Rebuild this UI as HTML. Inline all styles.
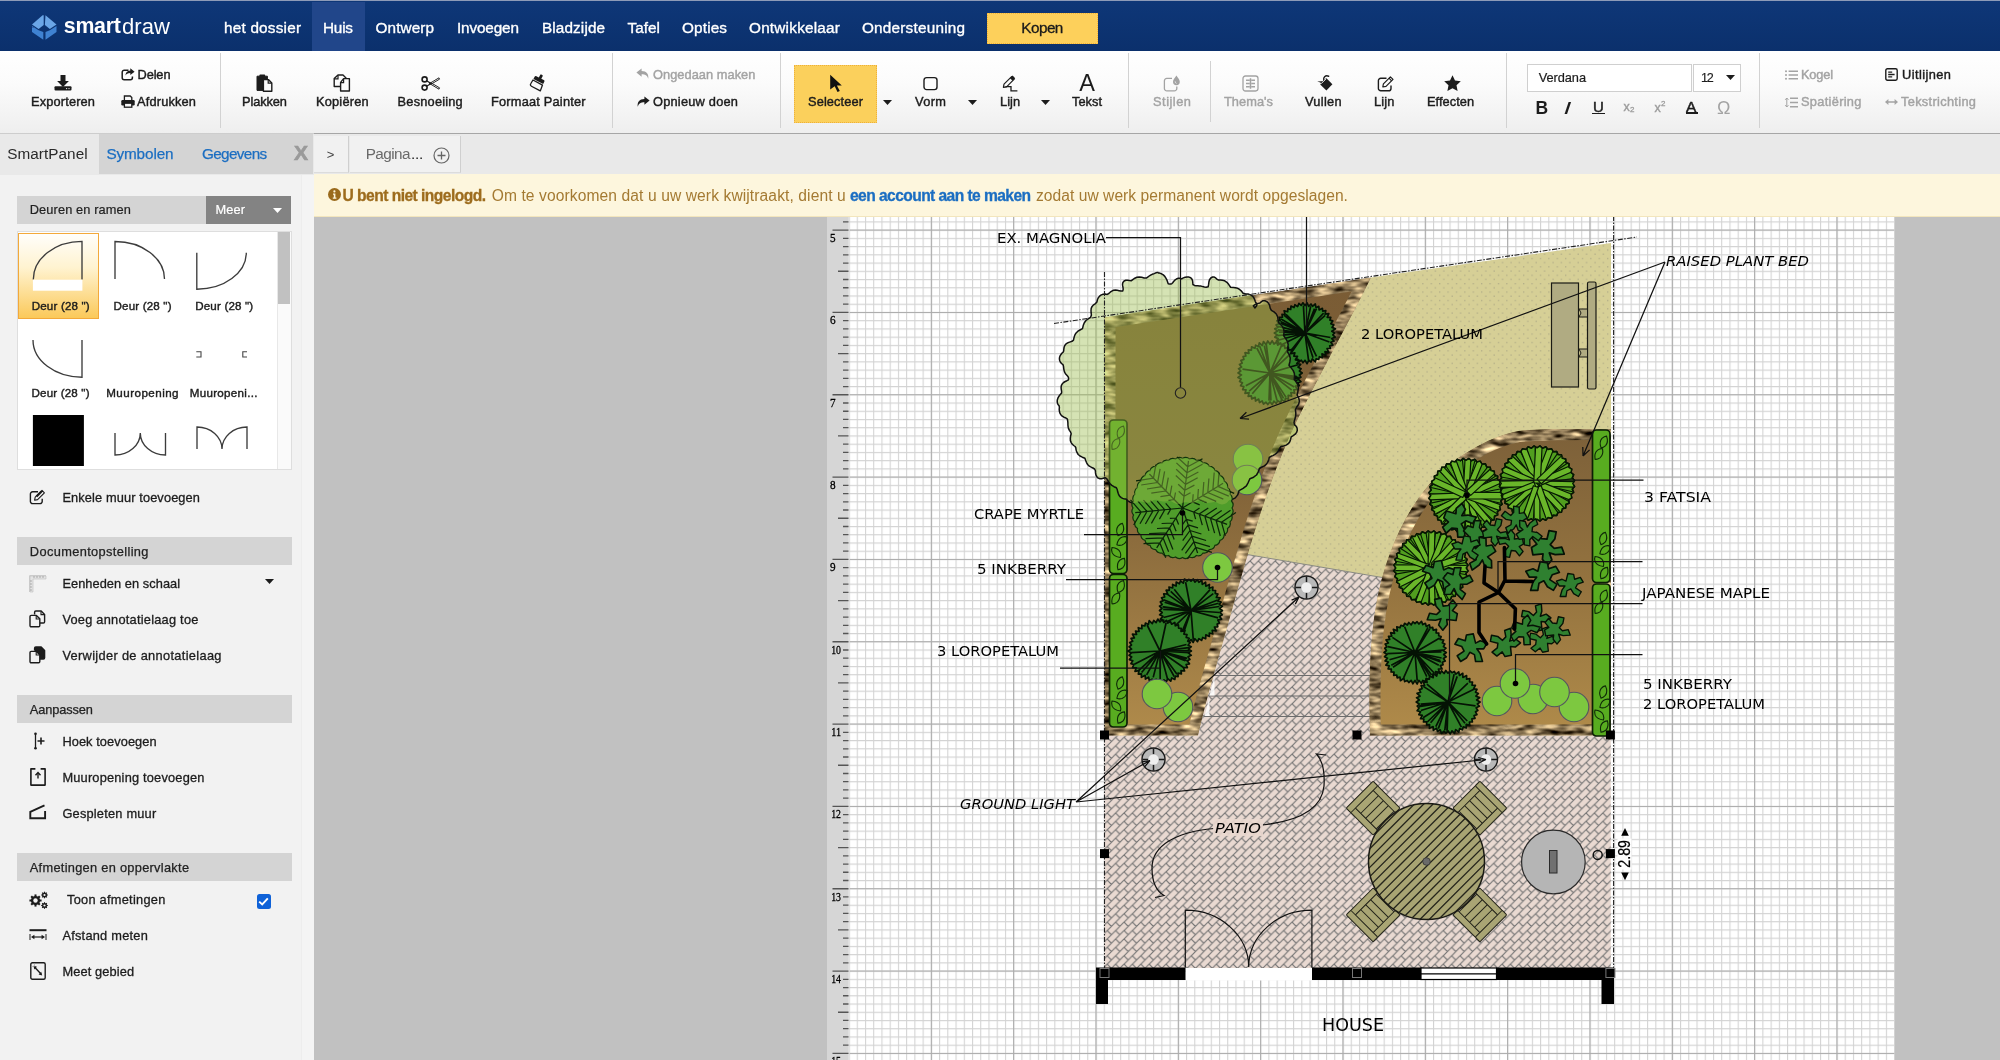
<!DOCTYPE html>
<html lang="nl"><head><meta charset="utf-8"><title>SmartDraw</title><style>
*{box-sizing:border-box}
html,body{margin:0;padding:0;width:2000px;height:1060px;overflow:hidden;background:#c1c1c1;font-family:"Liberation Sans",sans-serif}
.t{position:absolute;white-space:pre;line-height:1;}
.i{position:absolute;overflow:visible}
#nav{position:absolute;left:0;top:0;width:2000px;height:51px;background:linear-gradient(#0e3778,#0b306c)}
#navtop{position:absolute;left:0;top:0;width:2000px;height:1px;background:#8d9bb8}
#huis{position:absolute;left:312px;top:2px;width:53px;height:49px;background:#21468a}
#kopen{position:absolute;left:987px;top:12.800px;width:111.200px;height:31px;background:#fdd05b;border:1px dotted #f5b335}
#tb{position:absolute;left:0;top:51px;width:2000px;height:82.500px;background:linear-gradient(#fff 0%,#fbfbfb 40%,#eeeeee 100%)}
#tbline{position:absolute;left:313.500px;top:133.300px;width:1687px;height:1.800px;background:#a6a6a6}
#tbline2{position:absolute;left:0;top:133px;width:313.500px;height:1px;background:#cdcdcd}
.sep{position:absolute;width:1px;background:#d2d2d2}
#sel{position:absolute;left:794px;top:64.500px;width:83px;height:58.500px;background:#fbd05c;border:1px dotted #eeb03a}
#fontbox{position:absolute;left:1526.500px;top:64px;width:165px;height:27.500px;background:#fff;border:1px solid #cfcfcf}
#sizebox{position:absolute;left:1693px;top:64px;width:47.500px;height:27.500px;background:#fff;border:1px solid #cfcfcf}
#tabrow{position:absolute;left:0;top:133.500px;width:2000px;height:41px;background:#e9e9e9}
#tabgrey{position:absolute;left:99.200px;top:133.600px;width:214.300px;height:40px;background:#d4d4d4}
#tab1{position:absolute;left:313.500px;top:135.500px;width:35.300px;height:37.800px;background:#f1f1f1;border-right:1.200px solid #cfcfcf;border-bottom:1px solid #dcdcdc}
#tab2{position:absolute;left:349.500px;top:135.500px;width:111.500px;height:37.800px;background:#f1f1f1;border-right:1.200px solid #cfcfcf;border-bottom:1px solid #dcdcdc}
#banner{position:absolute;left:313.500px;top:174.200px;width:1687px;height:42.400px;background:#fdf6dd;border-bottom:1px solid #f3e6bd}
#left{position:absolute;left:0;top:134px;width:313.500px;height:926px;background:#f2f2f2}
#leftline{position:absolute;left:301px;top:174px;width:12.500px;height:886px;background:#f4f4f4;border-left:1px solid #ededed}
.hdr{position:absolute;background:#d4d4d4}
#meer{position:absolute;left:205.700px;top:196px;width:85.500px;height:28px;background:#838383}
#symbox{position:absolute;left:16.500px;top:230.500px;width:275px;height:239.500px;background:#fff;border:1px solid #dedede}
#symsel{position:absolute;left:17.500px;top:232.500px;width:81.500px;height:86.500px;background:linear-gradient(#fffefb 0%,#fff3d0 40%,#fbc95a 100%);border:1px solid #f3a93a}
#scrolltrack{position:absolute;left:276.500px;top:231.500px;width:14px;height:237.500px;background:#fafafa;border-left:1px solid #e8e8e8}
#scrollthumb{position:absolute;left:277.500px;top:232px;width:12.500px;height:71.500px;background:#c1c1c1}
#chk{position:absolute;left:256.500px;top:894px;width:14.500px;height:14.500px;background:#0f62d8;border-radius:2.500px}
#cv{position:absolute;left:0;top:0}
#root{position:absolute;left:0;top:0;width:2000px;height:1060px;will-change:transform}
</style></head><body><div id="root">
<svg id="cv" width="2000" height="1060" viewBox="0 0 2000 1060"><defs><pattern id="gmin" x="848.5" y="229.6" width="8.2330" height="8.2330" patternUnits="userSpaceOnUse"><path d="M0 0.500H8.233M0.500 0V8.233" stroke="#d3d3d3" stroke-width="1.150" fill="none"/></pattern><pattern id="gmaj" x="848.5" y="229.6" width="82.33" height="82.33" patternUnits="userSpaceOnUse"><path d="M0 0.500H82.33M0.500 0V82.33" stroke="#ababab" stroke-width="1.200" fill="none"/></pattern><pattern id="pave" x="6.800" y="6.600" width="8.4" height="8.4" patternUnits="userSpaceOnUse"><rect width="8.4" height="8.4" fill="#e9d9d1"/><path d="M-1 9.4L9.4 -1M-1 1L1 -1M7.4 9.4L9.4 7.4M0 0L4.2 4.2" stroke="#737373" stroke-width="1.150" fill="none"/></pattern><pattern id="sand" x="2.600" y="5.800" width="8.4" height="8.4" patternUnits="userSpaceOnUse"><rect width="8.4" height="8.4" fill="#d6cf96"/><rect x="0" y="0" width="1.300" height="1.300" fill="#b3ae88"/><rect x="4.2" y="4.2" width="1.300" height="1.300" fill="#b3ae88"/></pattern><linearGradient id="soilL" x1="0" y1="0" x2="0" y2="1"><stop offset="0" stop-color="#7a5c35"/><stop offset=".42" stop-color="#7f6138"/><stop offset="1" stop-color="#b08b4b"/></linearGradient><linearGradient id="soilR" x1="0" y1="0" x2="0" y2="1"><stop offset="0" stop-color="#7c6039"/><stop offset=".5" stop-color="#94733f"/><stop offset="1" stop-color="#b08b4a"/></linearGradient><filter id="stone" x="-5%" y="-5%" width="110%" height="110%" color-interpolation-filters="sRGB">
<feTurbulence type="fractalNoise" baseFrequency="0.06 0.17" numOctaves="2" seed="7" result="n"/>
<feColorMatrix in="n" type="matrix" values="1.75 0 0 0 -0.3  1.6 0 0 0 -0.31  1.3 0 0 0 -0.3  0 0 0 0 1" result="c"/>
<feComposite in="c" in2="SourceAlpha" operator="in"/></filter><clipPath id="cBL"><path d="M1104.5 317.5 L1371 277.5 C1345 330 1308 395 1288 440 C1262 500 1246 560 1232 610 C1218 660 1206 700 1198 735.5 L1104.5 735.5Z"/></clipPath><clipPath id="cBR"><path d="M1370 735.5 C1369 700 1369 665 1372.5 631 C1376 600 1381 578 1389 556 C1398 531 1410 508 1425.5 489 C1438 473 1453 460 1471 450 C1486 441 1502 434 1519 431 C1540 428.500 1565 429 1611 429 L1611 735.5Z"/></clipPath><clipPath id="cpage"><rect x="313.5" y="216.5" width="1700" height="860"/></clipPath></defs><g clip-path="url(#cpage)"><rect x="313.5" y="216.5" width="1687" height="850" fill="#c1c1c1"/><rect x="827" y="216.5" width="21.5" height="850" fill="#d6d6d6"/><rect x="848.5" y="216.5" width="1045.8" height="850" fill="#fff"/><rect x="848.5" y="216.5" width="1045.8" height="850" fill="url(#gmin)"/><rect x="849.8" y="216.5" width="1044.5" height="850" fill="url(#gmaj)"/><path d="M843 221.87H848.5M832.5 230.10H848.5M843 238.33H848.5M843 246.57H848.5M843 254.80H848.5M843 263.03H848.5M838 271.26H848.5M843 279.50H848.5M843 287.73H848.5M843 295.96H848.5M843 304.20H848.5M832.5 312.43H848.5M843 320.66H848.5M843 328.90H848.5M843 337.13H848.5M843 345.36H848.5M838 353.60H848.5M843 361.83H848.5M843 370.06H848.5M843 378.29H848.5M843 386.53H848.5M832.5 394.76H848.5M843 402.99H848.5M843 411.23H848.5M843 419.46H848.5M843 427.69H848.5M838 435.92H848.5M843 444.16H848.5M843 452.39H848.5M843 460.62H848.5M843 468.86H848.5M832.5 477.09H848.5M843 485.32H848.5M843 493.56H848.5M843 501.79H848.5M843 510.02H848.5M838 518.25H848.5M843 526.49H848.5M843 534.72H848.5M843 542.95H848.5M843 551.19H848.5M832.5 559.42H848.5M843 567.65H848.5M843 575.89H848.5M843 584.12H848.5M843 592.35H848.5M838 600.59H848.5M843 608.82H848.5M843 617.05H848.5M843 625.28H848.5M843 633.52H848.5M832.5 641.75H848.5M843 649.98H848.5M843 658.22H848.5M843 666.45H848.5M843 674.68H848.5M838 682.91H848.5M843 691.15H848.5M843 699.38H848.5M843 707.61H848.5M843 715.85H848.5M832.5 724.08H848.5M843 732.31H848.5M843 740.55H848.5M843 748.78H848.5M843 757.01H848.5M838 765.25H848.5M843 773.48H848.5M843 781.71H848.5M843 789.94H848.5M843 798.18H848.5M832.5 806.41H848.5M843 814.64H848.5M843 822.88H848.5M843 831.11H848.5M843 839.34H848.5M838 847.58H848.5M843 855.81H848.5M843 864.04H848.5M843 872.27H848.5M843 880.51H848.5M832.5 888.74H848.5M843 896.97H848.5M843 905.21H848.5M843 913.44H848.5M843 921.67H848.5M838 929.91H848.5M843 938.14H848.5M843 946.37H848.5M843 954.60H848.5M843 962.84H848.5M832.5 971.07H848.5M843 979.30H848.5M843 987.54H848.5M843 995.77H848.5M843 1004.00H848.5M838 1012.24H848.5M843 1020.47H848.5M843 1028.70H848.5M843 1036.93H848.5M843 1045.17H848.5M832.5 1053.40H848.5M843 1061.63H848.5" stroke="#555" stroke-width="1.300" fill="none"/><text x="830" y="242.0" font-family="Liberation Serif, serif" font-size="11.800" fill="#000" stroke="#000" stroke-width=".3" textLength="5.6" lengthAdjust="spacingAndGlyphs">5</text><text x="830" y="324.3" font-family="Liberation Serif, serif" font-size="11.800" fill="#000" stroke="#000" stroke-width=".3" textLength="5.6" lengthAdjust="spacingAndGlyphs">6</text><text x="830" y="406.7" font-family="Liberation Serif, serif" font-size="11.800" fill="#000" stroke="#000" stroke-width=".3" textLength="5.6" lengthAdjust="spacingAndGlyphs">7</text><text x="830" y="489.0" font-family="Liberation Serif, serif" font-size="11.800" fill="#000" stroke="#000" stroke-width=".3" textLength="5.6" lengthAdjust="spacingAndGlyphs">8</text><text x="830" y="571.3" font-family="Liberation Serif, serif" font-size="11.800" fill="#000" stroke="#000" stroke-width=".3" textLength="5.6" lengthAdjust="spacingAndGlyphs">9</text><text x="831.2" y="653.6" font-family="Liberation Serif, serif" font-size="11.800" fill="#000" stroke="#000" stroke-width=".3" textLength="9.8" lengthAdjust="spacingAndGlyphs">10</text><text x="831.2" y="736.0" font-family="Liberation Serif, serif" font-size="11.800" fill="#000" stroke="#000" stroke-width=".3" textLength="9.8" lengthAdjust="spacingAndGlyphs">11</text><text x="831.2" y="818.3" font-family="Liberation Serif, serif" font-size="11.800" fill="#000" stroke="#000" stroke-width=".3" textLength="9.8" lengthAdjust="spacingAndGlyphs">12</text><text x="831.2" y="900.6" font-family="Liberation Serif, serif" font-size="11.800" fill="#000" stroke="#000" stroke-width=".3" textLength="9.8" lengthAdjust="spacingAndGlyphs">13</text><text x="831.2" y="983.0" font-family="Liberation Serif, serif" font-size="11.800" fill="#000" stroke="#000" stroke-width=".3" textLength="9.8" lengthAdjust="spacingAndGlyphs">14</text><text x="831.2" y="1065.3" font-family="Liberation Serif, serif" font-size="11.800" fill="#000" stroke="#000" stroke-width=".3" textLength="9.8" lengthAdjust="spacingAndGlyphs">15</text><path d="M1371 277.5 L1611 243 L1611 440 L1400 600 L1391 579 L1247 554.500 C1262 500 1280 450 1300 410 C1320 370 1348 322 1371 277.5Z" fill="url(#sand)"/><path d="M1247 554.500 L1391 579 L1400 600 L1400 735.5 L1610.8 735.5 L1610.8 968 L1104.5 968 L1104.5 735.5 L1198 735.5 C1206 700 1218 660 1232 610Z" fill="url(#pave)"/><path d="M1214 675.500H1370M1209 696H1370M1204 716.500H1370" stroke="#6c6c6c" stroke-width="1.100" fill="none"/><path d="M1247 554.500L1391 579" stroke="#8a8a80" stroke-width="1" fill="none"/><path d="M1214.500 676.500L1209.500 695.500H1214.500ZM1209.500 697L1204.500 716H1209.500Z" fill="#fff" opacity=".85"/><g clip-path="url(#cBL)"><path d="M1104.5 317.5 L1371 277.5 C1345 330 1308 395 1288 440 C1262 500 1246 560 1232 610 C1218 660 1206 700 1198 735.5 L1104.5 735.5Z" fill="url(#soilL)"/><path d="M1104.5 317.5 L1371 277.5 C1345 330 1308 395 1288 440 C1262 500 1246 560 1232 610 C1218 660 1206 700 1198 735.5 L1104.5 735.5Z" fill="none" stroke="#a59668" stroke-width="22" filter="url(#stone)"/></g><g clip-path="url(#cBR)"><path d="M1370 735.5 C1369 700 1369 665 1372.5 631 C1376 600 1381 578 1389 556 C1398 531 1410 508 1425.5 489 C1438 473 1453 460 1471 450 C1486 441 1502 434 1519 431 C1540 428.500 1565 429 1611 429 L1611 735.5Z" fill="url(#soilR)"/><path d="M1370 735.5 C1369 700 1369 665 1372.5 631 C1376 600 1381 578 1389 556 C1398 531 1410 508 1425.5 489 C1438 473 1453 460 1471 450 C1486 441 1502 434 1519 431 C1540 428.500 1565 429 1611 429 L1611 735.5Z" fill="none" stroke="#a59668" stroke-width="22" filter="url(#stone)"/></g><path d="M1334.8 333.0 L1332.8 334.9 L1335.2 337.2 L1331.6 338.5 L1334.1 341.1 L1330.8 342.2 L1332.9 345.1 L1329.7 345.8 L1330.4 348.4 L1327.0 348.5 L1328.7 352.3 L1325.0 351.7 L1325.8 355.3 L1322.0 353.9 L1322.4 357.6 L1319.4 356.7 L1318.7 359.5 L1316.2 358.7 L1315.3 361.9 L1312.3 358.9 L1311.0 362.0 L1308.7 360.3 L1307.1 363.7 L1305.0 360.3 L1303.0 362.8 L1301.3 360.1 L1299.0 362.0 L1297.7 359.1 L1294.9 361.4 L1294.1 358.2 L1291.3 359.5 L1290.9 356.2 L1287.8 357.4 L1287.7 354.3 L1284.6 354.9 L1285.3 351.4 L1281.3 352.3 L1282.5 348.9 L1279.1 348.8 L1280.9 345.5 L1276.8 345.3 L1278.7 342.3 L1276.4 341.0 L1278.3 338.6 L1274.8 337.1 L1277.3 334.9 L1274.3 333.0 L1277.7 331.1 L1274.7 328.8 L1277.9 327.4 L1276.1 324.9 L1279.0 323.8 L1276.9 320.8 L1280.2 320.2 L1279.2 317.3 L1282.5 317.1 L1282.0 314.3 L1285.1 314.5 L1284.1 310.7 L1287.7 311.8 L1287.8 308.6 L1290.7 309.5 L1291.0 306.0 L1294.0 307.6 L1294.9 304.7 L1297.6 306.6 L1298.9 303.4 L1301.2 305.4 L1302.9 302.8 L1305.0 305.6 L1307.1 302.9 L1308.7 306.3 L1311.0 304.0 L1312.5 306.3 L1315.3 304.0 L1316.0 307.7 L1318.8 306.3 L1319.1 309.9 L1322.4 308.3 L1322.7 311.2 L1325.8 310.7 L1325.1 314.2 L1328.8 313.7 L1327.2 317.3 L1330.8 317.3 L1329.9 320.1 L1332.8 320.9 L1330.8 323.8 L1333.8 324.9 L1332.0 327.4 L1335.5 328.8 L1331.8 331.2Z" fill="#308028" stroke="#041204" stroke-width="1.7" stroke-linejoin="round"/><path d="M1305.0 333.0L1330.4 337.5M1305.0 333.0L1329.4 342.0M1305.0 333.0L1316.5 356.3M1305.0 333.0L1313.0 357.7M1305.0 333.0L1308.5 360.1M1305.0 333.0L1290.3 354.3M1305.0 333.0L1288.6 353.6M1305.0 333.0L1280.2 345.4M1305.0 333.0L1278.0 340.3M1305.0 333.0L1277.2 335.6M1305.0 333.0L1278.9 332.2M1305.0 333.0L1277.8 329.8M1305.0 333.0L1278.1 326.4M1305.0 333.0L1280.5 323.1M1305.0 333.0L1280.4 321.4M1305.0 333.0L1281.0 318.9M1305.0 333.0L1284.0 315.1M1305.0 333.0L1286.0 314.3M1305.0 333.0L1303.4 305.5M1305.0 333.0L1310.7 306.3M1305.0 333.0L1314.5 308.6M1305.0 333.0L1316.5 308.7M1305.0 333.0L1323.6 313.2M1305.0 333.0L1325.2 315.4" stroke="#041204" stroke-width="1.7" fill="none"/><path d="M1302.2 373.0 L1299.4 375.0 L1300.9 377.2 L1297.9 378.8 L1300.9 381.7 L1297.6 382.8 L1299.3 385.7 L1295.5 386.2 L1297.2 389.5 L1293.8 389.8 L1294.7 393.1 L1290.9 392.5 L1291.6 396.1 L1288.2 395.4 L1288.4 399.1 L1285.4 398.3 L1284.8 401.6 L1281.6 399.6 L1280.6 402.8 L1277.7 400.6 L1276.3 403.5 L1273.9 401.1 L1272.2 404.6 L1270.0 401.8 L1267.8 404.5 L1266.0 402.2 L1263.5 404.1 L1262.2 401.0 L1259.5 402.6 L1258.7 399.1 L1255.5 401.0 L1255.2 397.4 L1251.7 398.9 L1251.3 395.9 L1248.2 396.3 L1249.1 392.5 L1245.0 393.3 L1246.0 389.9 L1242.7 389.6 L1243.8 386.6 L1240.6 385.8 L1242.4 382.8 L1239.6 381.5 L1241.1 379.0 L1238.0 377.4 L1241.5 374.9 L1238.0 373.0 L1240.8 371.0 L1238.6 368.7 L1241.6 367.1 L1239.5 364.5 L1242.2 363.1 L1240.9 360.4 L1243.9 359.5 L1243.1 356.6 L1245.9 356.0 L1245.0 352.7 L1248.9 353.3 L1248.3 349.8 L1251.4 350.1 L1251.6 346.9 L1255.0 348.3 L1255.6 345.2 L1258.5 346.6 L1259.3 342.9 L1262.3 345.5 L1263.5 341.5 L1266.1 344.6 L1267.8 340.9 L1270.0 344.2 L1272.2 340.8 L1274.0 344.0 L1276.5 342.0 L1277.8 345.1 L1280.7 343.0 L1281.6 346.3 L1284.5 345.1 L1284.9 348.5 L1288.3 347.1 L1288.6 350.1 L1291.7 349.7 L1290.8 353.6 L1294.9 352.8 L1293.9 356.1 L1297.5 356.3 L1295.4 359.8 L1299.3 360.3 L1296.8 363.5 L1300.7 364.4 L1298.1 367.2 L1301.1 368.7 L1299.4 371.0Z" fill="#308028" stroke="#041204" stroke-width="1.7" stroke-linejoin="round"/><path d="M1270.0 373.0L1296.8 376.6M1270.0 373.0L1298.8 377.6M1270.0 373.0L1298.8 378.9M1270.0 373.0L1297.6 380.7M1270.0 373.0L1294.3 386.9M1270.0 373.0L1291.7 390.1M1270.0 373.0L1286.1 397.4M1270.0 373.0L1283.5 398.3M1270.0 373.0L1281.9 399.9M1270.0 373.0L1277.0 400.5M1270.0 373.0L1270.9 400.6M1270.0 373.0L1269.0 400.6M1270.0 373.0L1252.3 393.7M1270.0 373.0L1249.2 391.2M1270.0 373.0L1245.8 385.7M1270.0 373.0L1242.5 369.1M1270.0 373.0L1256.8 348.0M1270.0 373.0L1259.6 346.0M1270.0 373.0L1264.3 345.7M1270.0 373.0L1266.3 344.5M1270.0 373.0L1281.3 346.0M1270.0 373.0L1287.2 350.5M1270.0 373.0L1290.0 354.4M1270.0 373.0L1298.0 364.8" stroke="#041204" stroke-width="1.7" fill="none"/><rect x="1109.5" y="574.5" width="17.5" height="152.5" rx="4" fill="#58ac20" stroke="#0c1f05" stroke-width="1.700"/><path d="M0 -6.500Q4.500 -2 3.200 2.500Q2 5.500 0 6.500Q-4.500 2 -3.200 -2.500Q-2 -5.500 0 -6.500Z" transform="translate(1120.8 586.5) rotate(25)" fill="none" stroke="#0f2a08" stroke-width="1.100"/><path d="M0 -6.500Q4.500 -2 3.200 2.500Q2 5.500 0 6.500Q-4.500 2 -3.200 -2.500Q-2 -5.500 0 -6.500Z" transform="translate(1115.8 598.5) rotate(35)" fill="none" stroke="#0f2a08" stroke-width="1.100"/><path d="M0 -6.500Q4.500 -2 3.200 2.500Q2 5.500 0 6.500Q-4.500 2 -3.200 -2.500Q-2 -5.500 0 -6.500Z" transform="translate(1120.2 683.0) rotate(20)" fill="none" stroke="#0f2a08" stroke-width="1.100"/><path d="M0 -6.500Q4.500 -2 3.200 2.500Q2 5.500 0 6.500Q-4.500 2 -3.200 -2.500Q-2 -5.500 0 -6.500Z" transform="translate(1122.2 694.5) rotate(55)" fill="none" stroke="#0f2a08" stroke-width="1.100"/><path d="M0 -6.500Q4.500 -2 3.200 2.500Q2 5.500 0 6.500Q-4.500 2 -3.200 -2.500Q-2 -5.500 0 -6.500Z" transform="translate(1116.2 706.0) rotate(-40)" fill="none" stroke="#0f2a08" stroke-width="1.100"/><path d="M0 -6.500Q4.500 -2 3.200 2.500Q2 5.500 0 6.500Q-4.500 2 -3.200 -2.500Q-2 -5.500 0 -6.500Z" transform="translate(1121.2 717.5) rotate(30)" fill="none" stroke="#0f2a08" stroke-width="1.100"/><rect x="1592.5" y="430" width="17.5" height="152.5" rx="4" fill="#58ac20" stroke="#0c1f05" stroke-width="1.700"/><path d="M0 -6.500Q4.500 -2 3.200 2.500Q2 5.500 0 6.500Q-4.500 2 -3.200 -2.500Q-2 -5.500 0 -6.500Z" transform="translate(1603.8 442.0) rotate(25)" fill="none" stroke="#0f2a08" stroke-width="1.100"/><path d="M0 -6.500Q4.500 -2 3.200 2.500Q2 5.500 0 6.500Q-4.500 2 -3.200 -2.500Q-2 -5.500 0 -6.500Z" transform="translate(1598.8 454.0) rotate(35)" fill="none" stroke="#0f2a08" stroke-width="1.100"/><path d="M0 -6.500Q4.500 -2 3.200 2.500Q2 5.500 0 6.500Q-4.500 2 -3.200 -2.500Q-2 -5.500 0 -6.500Z" transform="translate(1603.2 538.5) rotate(20)" fill="none" stroke="#0f2a08" stroke-width="1.100"/><path d="M0 -6.500Q4.500 -2 3.200 2.500Q2 5.500 0 6.500Q-4.500 2 -3.200 -2.500Q-2 -5.500 0 -6.500Z" transform="translate(1605.2 550.0) rotate(55)" fill="none" stroke="#0f2a08" stroke-width="1.100"/><path d="M0 -6.500Q4.500 -2 3.200 2.500Q2 5.500 0 6.500Q-4.500 2 -3.200 -2.500Q-2 -5.500 0 -6.500Z" transform="translate(1599.2 561.5) rotate(-40)" fill="none" stroke="#0f2a08" stroke-width="1.100"/><path d="M0 -6.500Q4.500 -2 3.200 2.500Q2 5.500 0 6.500Q-4.500 2 -3.200 -2.500Q-2 -5.500 0 -6.500Z" transform="translate(1604.2 573.0) rotate(30)" fill="none" stroke="#0f2a08" stroke-width="1.100"/><rect x="1592.5" y="584" width="17.5" height="152" rx="4" fill="#58ac20" stroke="#0c1f05" stroke-width="1.700"/><path d="M0 -6.500Q4.500 -2 3.200 2.500Q2 5.500 0 6.500Q-4.500 2 -3.200 -2.500Q-2 -5.500 0 -6.500Z" transform="translate(1603.8 596.0) rotate(25)" fill="none" stroke="#0f2a08" stroke-width="1.100"/><path d="M0 -6.500Q4.500 -2 3.200 2.500Q2 5.500 0 6.500Q-4.500 2 -3.200 -2.500Q-2 -5.500 0 -6.500Z" transform="translate(1598.8 608.0) rotate(35)" fill="none" stroke="#0f2a08" stroke-width="1.100"/><path d="M0 -6.500Q4.500 -2 3.200 2.500Q2 5.500 0 6.500Q-4.500 2 -3.200 -2.500Q-2 -5.500 0 -6.500Z" transform="translate(1603.2 692.0) rotate(20)" fill="none" stroke="#0f2a08" stroke-width="1.100"/><path d="M0 -6.500Q4.500 -2 3.200 2.500Q2 5.500 0 6.500Q-4.500 2 -3.200 -2.500Q-2 -5.500 0 -6.500Z" transform="translate(1605.2 703.5) rotate(55)" fill="none" stroke="#0f2a08" stroke-width="1.100"/><path d="M0 -6.500Q4.500 -2 3.200 2.500Q2 5.500 0 6.500Q-4.500 2 -3.200 -2.500Q-2 -5.500 0 -6.500Z" transform="translate(1599.2 715.0) rotate(-40)" fill="none" stroke="#0f2a08" stroke-width="1.100"/><path d="M0 -6.500Q4.500 -2 3.200 2.500Q2 5.500 0 6.500Q-4.500 2 -3.200 -2.500Q-2 -5.500 0 -6.500Z" transform="translate(1604.2 726.5) rotate(30)" fill="none" stroke="#0f2a08" stroke-width="1.100"/><circle cx="1248" cy="459" r="14.8" fill="#7dc840" stroke="#55555f" stroke-width="1.100"/><circle cx="1247" cy="480" r="14.8" fill="#7dc840" stroke="#55555f" stroke-width="1.100"/><rect x="1109.5" y="420" width="17.5" height="153.5" rx="4" fill="#58ac20" stroke="#0c1f05" stroke-width="1.700"/><path d="M0 -6.500Q4.500 -2 3.200 2.500Q2 5.500 0 6.500Q-4.500 2 -3.200 -2.500Q-2 -5.500 0 -6.500Z" transform="translate(1120.8 432.0) rotate(25)" fill="none" stroke="#0f2a08" stroke-width="1.100"/><path d="M0 -6.500Q4.500 -2 3.200 2.500Q2 5.500 0 6.500Q-4.500 2 -3.200 -2.500Q-2 -5.500 0 -6.500Z" transform="translate(1115.8 444.0) rotate(35)" fill="none" stroke="#0f2a08" stroke-width="1.100"/><path d="M0 -6.500Q4.500 -2 3.200 2.500Q2 5.500 0 6.500Q-4.500 2 -3.200 -2.500Q-2 -5.500 0 -6.500Z" transform="translate(1120.2 529.5) rotate(20)" fill="none" stroke="#0f2a08" stroke-width="1.100"/><path d="M0 -6.500Q4.500 -2 3.200 2.500Q2 5.500 0 6.500Q-4.500 2 -3.200 -2.500Q-2 -5.500 0 -6.500Z" transform="translate(1122.2 541.0) rotate(55)" fill="none" stroke="#0f2a08" stroke-width="1.100"/><path d="M0 -6.500Q4.500 -2 3.200 2.500Q2 5.500 0 6.500Q-4.500 2 -3.200 -2.500Q-2 -5.500 0 -6.500Z" transform="translate(1116.2 552.5) rotate(-40)" fill="none" stroke="#0f2a08" stroke-width="1.100"/><path d="M0 -6.500Q4.500 -2 3.200 2.500Q2 5.500 0 6.500Q-4.500 2 -3.200 -2.500Q-2 -5.500 0 -6.500Z" transform="translate(1121.2 564.0) rotate(30)" fill="none" stroke="#0f2a08" stroke-width="1.100"/><path d="M1158.5 273.1 L1159.7 273.1 L1161.5 273.8 L1163.3 274.9 L1164.8 276.4 L1165.8 278.0 L1166.6 279.4 L1167.2 280.8 L1167.7 282.3 L1168.2 283.7 L1169.6 284.1 L1170.9 284.1 L1171.9 283.6 L1172.7 282.7 L1173.6 281.5 L1174.8 280.2 L1176.4 279.0 L1178.3 278.3 L1180.1 278.3 L1181.7 278.9 L1183.3 277.9 L1185.2 277.2 L1187.1 276.9 L1189.0 277.1 L1190.7 277.8 L1191.9 279.1 L1192.6 280.8 L1192.8 282.6 L1192.9 284.5 L1194.5 285.4 L1196.1 285.7 L1197.8 285.8 L1199.5 285.9 L1201.1 286.1 L1202.7 286.6 L1204.4 287.0 L1206.1 287.2 L1208.2 286.7 L1208.6 284.4 L1208.9 282.0 L1209.5 279.8 L1210.8 278.0 L1212.5 277.0 L1214.3 277.1 L1215.7 277.9 L1216.8 279.1 L1218.2 279.9 L1220.3 279.9 L1222.4 280.2 L1224.7 280.8 L1226.9 282.3 L1228.8 284.6 L1230.6 287.2 L1233.8 287.4 L1236.6 287.9 L1239.0 289.0 L1241.2 290.8 L1243.1 293.2 L1245.7 294.0 L1248.5 294.1 L1250.7 294.9 L1252.5 296.1 L1253.8 297.8 L1254.7 299.6 L1255.2 301.3 L1255.7 302.5 L1256.6 303.1 L1257.0 304.0 L1256.8 305.3 L1256.1 306.6 L1255.3 307.5 L1254.9 307.9 L1253.3 305.8 L1253.9 305.3 L1255.3 304.3 L1257.5 303.4 L1260.0 302.9 L1261.5 301.7 L1263.0 300.7 L1264.9 300.8 L1266.9 301.6 L1268.5 303.2 L1269.6 305.4 L1270.2 308.1 L1271.4 310.4 L1274.0 311.9 L1276.3 314.0 L1277.7 316.8 L1278.1 320.2 L1279.1 323.3 L1281.8 325.7 L1283.5 328.5 L1284.1 331.8 L1283.6 335.5 L1285.5 338.4 L1287.4 341.4 L1288.2 344.7 L1287.6 348.3 L1287.5 351.8 L1289.4 355.0 L1290.3 358.3 L1289.9 361.7 L1289.0 365.2 L1291.1 367.9 L1293.1 370.4 L1294.3 373.1 L1294.6 376.1 L1294.2 379.4 L1296.2 382.0 L1297.9 384.8 L1298.4 388.1 L1297.8 391.5 L1297.1 394.8 L1298.7 397.9 L1299.4 401.1 L1298.7 404.2 L1296.7 407.0 L1295.4 409.8 L1295.8 413.0 L1295.7 415.8 L1295.2 418.1 L1294.5 420.2 L1294.0 422.6 L1294.5 424.6 L1296.1 426.2 L1297.1 428.1 L1297.3 430.3 L1296.6 432.4 L1295.2 434.2 L1293.2 435.6 L1291.2 436.9 L1290.6 439.4 L1289.8 441.7 L1288.3 443.7 L1286.2 445.1 L1283.7 445.9 L1281.0 446.4 L1279.6 448.5 L1278.5 450.6 L1277.4 452.3 L1276.1 453.7 L1274.6 454.7 L1272.9 455.6 L1271.0 456.3 L1269.3 457.4 L1268.8 459.4 L1268.2 461.2 L1267.3 462.9 L1266.2 464.4 L1264.4 465.8 L1262.0 467.0 L1259.4 468.5 L1258.3 471.9 L1256.5 475.0 L1253.6 477.2 L1249.9 478.7 L1248.3 482.3 L1246.4 485.8 L1243.1 488.4 L1239.1 490.6 L1237.7 494.9 L1235.3 497.9 L1232.3 499.4 L1229.7 500.0 L1228.3 500.9 L1227.4 502.2 L1226.1 503.2 L1224.4 504.0 L1222.0 504.4 L1219.0 503.8 L1215.6 501.8 L1211.6 502.5 L1207.5 503.0 L1203.6 501.8 L1200.0 499.9 L1196.6 501.6 L1193.4 502.9 L1190.0 503.1 L1186.5 502.2 L1183.3 502.6 L1180.0 504.1 L1176.5 504.1 L1173.2 502.6 L1170.1 500.5 L1166.4 501.4 L1163.0 501.6 L1160.0 501.0 L1156.8 499.7 L1153.6 500.1 L1150.7 501.9 L1147.8 502.7 L1144.8 502.6 L1142.0 501.6 L1139.5 501.4 L1137.0 502.5 L1134.6 503.0 L1132.5 503.0 L1130.5 502.4 L1128.9 501.5 L1127.6 500.5 L1126.7 499.6 L1126.1 499.0 L1125.1 499.0 L1124.0 498.8 L1122.6 498.4 L1121.3 497.6 L1120.0 496.6 L1119.0 495.2 L1118.3 493.6 L1117.7 491.8 L1117.3 489.8 L1116.4 487.8 L1114.0 486.7 L1111.8 485.4 L1110.1 483.8 L1108.8 482.1 L1107.8 480.3 L1106.7 478.7 L1105.1 477.7 L1103.3 478.3 L1101.7 478.7 L1099.9 478.7 L1098.2 478.1 L1096.8 476.7 L1095.9 474.9 L1095.5 472.9 L1095.4 470.7 L1094.6 469.0 L1092.9 468.0 L1091.5 467.3 L1090.3 466.7 L1089.3 466.1 L1088.3 465.2 L1087.3 464.1 L1086.5 462.5 L1085.7 460.5 L1084.9 458.2 L1082.3 457.2 L1080.0 456.0 L1078.2 454.5 L1077.1 452.7 L1076.4 451.0 L1076.0 449.3 L1075.8 447.7 L1075.1 446.5 L1073.7 445.5 L1072.3 444.3 L1071.2 442.6 L1070.4 440.6 L1070.3 438.3 L1070.6 436.0 L1071.2 433.7 L1070.5 431.9 L1069.4 430.3 L1068.6 428.7 L1068.2 427.2 L1068.0 425.8 L1067.9 424.4 L1067.9 422.9 L1067.7 421.2 L1067.4 419.2 L1065.9 418.0 L1063.9 417.2 L1062.2 416.1 L1060.8 414.7 L1059.9 413.1 L1059.4 411.3 L1059.2 409.3 L1059.4 407.4 L1059.1 405.8 L1058.0 404.5 L1057.4 403.0 L1057.2 401.4 L1057.3 399.9 L1057.8 398.4 L1058.4 397.1 L1059.3 395.8 L1060.3 394.4 L1061.6 392.9 L1061.6 391.1 L1061.2 389.2 L1061.1 387.3 L1061.4 385.4 L1062.3 383.8 L1063.6 382.5 L1065.2 381.5 L1066.9 380.7 L1068.5 379.8 L1068.6 378.1 L1068.1 376.8 L1067.3 375.8 L1066.6 375.0 L1065.7 374.0 L1065.0 372.9 L1064.4 371.6 L1064.0 370.1 L1063.7 368.3 L1063.5 366.4 L1063.0 364.7 L1061.5 363.5 L1060.3 362.1 L1059.7 360.5 L1059.4 358.9 L1059.6 357.2 L1060.2 355.6 L1061.1 354.3 L1062.1 353.0 L1063.3 352.0 L1063.7 350.8 L1063.8 349.3 L1064.0 347.8 L1064.4 346.4 L1065.0 345.2 L1065.8 344.1 L1066.8 343.4 L1067.8 342.8 L1068.9 342.4 L1070.3 341.9 L1072.0 341.3 L1073.5 340.1 L1074.0 337.7 L1074.7 335.4 L1075.9 333.2 L1077.6 331.4 L1079.9 330.0 L1082.5 328.6 L1083.2 325.6 L1084.3 322.8 L1086.0 320.5 L1088.2 318.8 L1090.6 317.3 L1091.4 315.1 L1091.1 312.7 L1091.0 310.5 L1091.2 308.4 L1092.1 306.4 L1093.6 304.8 L1095.5 303.6 L1096.9 302.0 L1097.4 299.8 L1098.3 297.8 L1099.6 296.1 L1101.3 294.9 L1103.1 294.3 L1105.2 294.1 L1107.2 294.4 L1108.8 293.5 L1110.2 292.2 L1111.8 291.1 L1113.5 290.3 L1115.5 290.1 L1117.3 290.3 L1119.1 290.7 L1120.9 291.1 L1122.8 290.9 L1123.2 289.2 L1123.0 287.5 L1122.7 285.9 L1122.5 284.2 L1122.9 282.5 L1124.1 281.0 L1125.8 280.3 L1127.6 280.2 L1129.5 280.5 L1131.4 280.7 L1133.1 279.4 L1134.8 278.2 L1136.9 277.3 L1139.2 277.0 L1141.7 277.3 L1144.1 278.0 L1146.3 278.1 L1148.0 276.9 L1149.2 276.0 L1150.2 275.3 L1151.1 274.8 L1151.8 274.5 L1152.6 274.1 L1153.4 273.9 L1154.2 273.6 L1155.2 273.1 L1156.2 272.7 L1157.3 272.4 L1158.1 272.6Z" fill="rgba(152,187,74,0.41)" stroke="#111" stroke-width="1.500" stroke-linejoin="round"/><clipPath id="ccrape"><circle cx="1182.500" cy="508" r="50"/></clipPath><path d="M1232.0 508.0Q1234.5 511.7 1231.5 515.0Q1233.4 519.1 1230.0 521.9Q1231.3 526.2 1227.5 528.6Q1228.2 533.0 1224.1 534.8Q1224.2 539.2 1219.9 540.4Q1219.3 544.8 1214.9 545.4Q1213.7 549.7 1209.3 549.6Q1207.5 553.7 1203.1 553.0Q1200.7 556.8 1196.4 555.5Q1193.6 558.9 1189.5 557.0Q1186.2 560.0 1182.5 557.5Q1178.8 560.0 1175.5 557.0Q1171.4 558.9 1168.6 555.5Q1164.3 556.8 1161.9 553.0Q1157.5 553.7 1155.7 549.6Q1151.3 549.7 1150.1 545.4Q1145.7 544.8 1145.1 540.4Q1140.8 539.2 1140.9 534.8Q1136.8 533.0 1137.5 528.6Q1133.7 526.2 1135.0 521.9Q1131.6 519.1 1133.5 515.0Q1130.5 511.7 1133.0 508.0Q1130.5 504.3 1133.5 501.0Q1131.6 496.9 1135.0 494.1Q1133.7 489.8 1137.5 487.4Q1136.8 483.0 1140.9 481.2Q1140.8 476.8 1145.1 475.6Q1145.7 471.2 1150.1 470.6Q1151.3 466.3 1155.7 466.4Q1157.5 462.3 1161.9 463.0Q1164.3 459.2 1168.6 460.5Q1171.4 457.1 1175.5 459.0Q1178.8 456.0 1182.5 458.5Q1186.2 456.0 1189.5 459.0Q1193.6 457.1 1196.4 460.5Q1200.7 459.2 1203.1 463.0Q1207.5 462.3 1209.3 466.4Q1213.7 466.3 1214.9 470.6Q1219.3 471.2 1219.9 475.6Q1224.2 476.8 1224.1 481.2Q1228.2 483.0 1227.5 487.4Q1231.3 489.8 1230.0 494.1Q1233.4 496.9 1231.5 501.0Q1234.5 504.3 1232.0 508.0Z" fill="#4f9d2b" stroke="#12330c" stroke-width="1.200"/><path d="M1182.5 508.0L1227.1 524.3M1193.7 512.1L1199.5 508.1M1193.7 512.1L1195.6 519.1M1199.2 514.1L1208.3 507.9M1199.2 514.1L1202.3 525.1M1204.8 516.1L1216.8 508.0M1204.8 516.1L1208.9 530.8M1210.4 518.2L1221.7 510.4M1210.4 518.2L1214.6 533.2M1216.0 520.2L1230.5 510.3M1216.0 520.2L1220.3 536.0M1221.5 522.3L1235.9 512.4M1221.5 522.3L1225.3 535.8M1182.5 508.0L1197.6 553.0M1186.3 519.3L1192.7 521.2M1186.3 519.3L1182.6 524.4M1188.2 524.9L1198.0 527.9M1188.2 524.9L1182.0 533.3M1190.0 530.5L1201.4 534.0M1190.0 530.5L1182.7 540.7M1191.9 536.2L1206.1 540.5M1191.9 536.2L1181.7 550.3M1193.8 541.8L1209.9 546.7M1193.8 541.8L1185.4 553.3M1195.7 547.4L1211.9 552.4M1195.7 547.4L1187.4 558.9M1182.5 508.0L1156.7 547.9M1176.0 518.0L1178.6 524.5M1176.0 518.0L1169.9 518.3M1172.8 523.0L1176.1 531.2M1172.8 523.0L1161.6 523.5M1169.6 527.9L1174.2 539.6M1169.6 527.9L1157.0 528.5M1166.4 532.9L1172.9 549.5M1166.4 532.9L1149.1 533.7M1163.1 537.9L1168.6 551.7M1163.1 537.9L1145.5 538.7M1159.9 542.9L1165.7 557.7M1159.9 542.9L1143.5 543.7M1182.5 508.0L1135.2 512.7M1170.7 509.2L1167.6 514.6M1170.7 509.2L1165.7 503.4M1164.8 509.8L1159.4 519.1M1164.8 509.8L1157.2 501.1M1158.9 510.3L1151.4 523.4M1158.9 510.3L1150.4 500.7M1153.0 510.9L1145.4 524.0M1153.0 510.9L1143.5 500.2M1147.0 511.5L1140.0 523.8M1147.0 511.5L1137.9 501.1M1141.1 512.1L1133.7 525.0M1141.1 512.1L1130.5 499.9M1182.5 508.0L1149.4 474.0M1174.2 499.5L1168.4 500.4M1174.2 499.5L1175.5 492.5M1170.1 495.2L1160.4 496.7M1170.1 495.2L1171.8 485.7M1165.9 491.0L1151.3 493.2M1165.9 491.0L1168.3 477.6M1161.8 486.7L1147.0 489.0M1161.8 486.7L1164.6 471.3M1157.6 482.5L1141.2 485.0M1157.6 482.5L1160.1 468.9M1153.5 478.2L1136.0 480.9M1153.5 478.2L1155.9 464.7M1182.5 508.0L1188.5 460.9M1184.0 496.2L1178.7 491.3M1184.0 496.2L1190.5 492.7M1184.7 490.3L1178.2 484.3M1184.7 490.3L1194.4 485.1M1185.5 484.4L1175.8 475.5M1185.5 484.4L1197.7 477.8M1186.2 478.5L1176.2 469.3M1186.2 478.5L1198.4 472.0M1187.0 472.7L1176.4 462.9M1187.0 472.7L1202.5 464.3M1187.7 466.8L1177.1 457.0M1187.7 466.8L1202.5 458.8M1182.5 508.0L1223.1 483.3M1192.6 501.8L1193.2 494.2M1192.6 501.8L1199.7 504.8M1197.7 498.7L1198.4 489.0M1197.7 498.7L1206.7 502.6M1202.8 495.6L1203.8 482.0M1202.8 495.6L1216.2 501.4M1207.8 492.5L1208.9 478.5M1207.8 492.5L1223.3 499.1M1212.9 489.5L1214.2 472.5M1212.9 489.5L1228.8 496.2M1218.0 486.4L1219.0 472.6M1218.0 486.4L1234.2 493.3" stroke="#0a2408" stroke-width="1.250" fill="none"/><path d="M1158.5 273.1 L1159.7 273.1 L1161.5 273.8 L1163.3 274.9 L1164.8 276.4 L1165.8 278.0 L1166.6 279.4 L1167.2 280.8 L1167.7 282.3 L1168.2 283.7 L1169.6 284.1 L1170.9 284.1 L1171.9 283.6 L1172.7 282.7 L1173.6 281.5 L1174.8 280.2 L1176.4 279.0 L1178.3 278.3 L1180.1 278.3 L1181.7 278.9 L1183.3 277.9 L1185.2 277.2 L1187.1 276.9 L1189.0 277.1 L1190.7 277.8 L1191.9 279.1 L1192.6 280.8 L1192.8 282.6 L1192.9 284.5 L1194.5 285.4 L1196.1 285.7 L1197.8 285.8 L1199.5 285.9 L1201.1 286.1 L1202.7 286.6 L1204.4 287.0 L1206.1 287.2 L1208.2 286.7 L1208.6 284.4 L1208.9 282.0 L1209.5 279.8 L1210.8 278.0 L1212.5 277.0 L1214.3 277.1 L1215.7 277.9 L1216.8 279.1 L1218.2 279.9 L1220.3 279.9 L1222.4 280.2 L1224.7 280.8 L1226.9 282.3 L1228.8 284.6 L1230.6 287.2 L1233.8 287.4 L1236.6 287.9 L1239.0 289.0 L1241.2 290.8 L1243.1 293.2 L1245.7 294.0 L1248.5 294.1 L1250.7 294.9 L1252.5 296.1 L1253.8 297.8 L1254.7 299.6 L1255.2 301.3 L1255.7 302.5 L1256.6 303.1 L1257.0 304.0 L1256.8 305.3 L1256.1 306.6 L1255.3 307.5 L1254.9 307.9 L1253.3 305.8 L1253.9 305.3 L1255.3 304.3 L1257.5 303.4 L1260.0 302.9 L1261.5 301.7 L1263.0 300.7 L1264.9 300.8 L1266.9 301.6 L1268.5 303.2 L1269.6 305.4 L1270.2 308.1 L1271.4 310.4 L1274.0 311.9 L1276.3 314.0 L1277.7 316.8 L1278.1 320.2 L1279.1 323.3 L1281.8 325.7 L1283.5 328.5 L1284.1 331.8 L1283.6 335.5 L1285.5 338.4 L1287.4 341.4 L1288.2 344.7 L1287.6 348.3 L1287.5 351.8 L1289.4 355.0 L1290.3 358.3 L1289.9 361.7 L1289.0 365.2 L1291.1 367.9 L1293.1 370.4 L1294.3 373.1 L1294.6 376.1 L1294.2 379.4 L1296.2 382.0 L1297.9 384.8 L1298.4 388.1 L1297.8 391.5 L1297.1 394.8 L1298.7 397.9 L1299.4 401.1 L1298.7 404.2 L1296.7 407.0 L1295.4 409.8 L1295.8 413.0 L1295.7 415.8 L1295.2 418.1 L1294.5 420.2 L1294.0 422.6 L1294.5 424.6 L1296.1 426.2 L1297.1 428.1 L1297.3 430.3 L1296.6 432.4 L1295.2 434.2 L1293.2 435.6 L1291.2 436.9 L1290.6 439.4 L1289.8 441.7 L1288.3 443.7 L1286.2 445.1 L1283.7 445.9 L1281.0 446.4 L1279.6 448.5 L1278.5 450.6 L1277.4 452.3 L1276.1 453.7 L1274.6 454.7 L1272.9 455.6 L1271.0 456.3 L1269.3 457.4 L1268.8 459.4 L1268.2 461.2 L1267.3 462.9 L1266.2 464.4 L1264.4 465.8 L1262.0 467.0 L1259.4 468.5 L1258.3 471.9 L1256.5 475.0 L1253.6 477.2 L1249.9 478.7 L1248.3 482.3 L1246.4 485.8 L1243.1 488.4 L1239.1 490.6 L1237.7 494.9 L1235.3 497.9 L1232.3 499.4 L1229.7 500.0 L1228.3 500.9 L1227.4 502.2 L1226.1 503.2 L1224.4 504.0 L1222.0 504.4 L1219.0 503.8 L1215.6 501.8 L1211.6 502.5 L1207.5 503.0 L1203.6 501.8 L1200.0 499.9 L1196.6 501.6 L1193.4 502.9 L1190.0 503.1 L1186.5 502.2 L1183.3 502.6 L1180.0 504.1 L1176.5 504.1 L1173.2 502.6 L1170.1 500.5 L1166.4 501.4 L1163.0 501.6 L1160.0 501.0 L1156.8 499.7 L1153.6 500.1 L1150.7 501.9 L1147.8 502.7 L1144.8 502.6 L1142.0 501.6 L1139.5 501.4 L1137.0 502.5 L1134.6 503.0 L1132.5 503.0 L1130.5 502.4 L1128.9 501.5 L1127.6 500.5 L1126.7 499.6 L1126.1 499.0 L1125.1 499.0 L1124.0 498.8 L1122.6 498.4 L1121.3 497.6 L1120.0 496.6 L1119.0 495.2 L1118.3 493.6 L1117.7 491.8 L1117.3 489.8 L1116.4 487.8 L1114.0 486.7 L1111.8 485.4 L1110.1 483.8 L1108.8 482.1 L1107.8 480.3 L1106.7 478.7 L1105.1 477.7 L1103.3 478.3 L1101.7 478.7 L1099.9 478.7 L1098.2 478.1 L1096.8 476.7 L1095.9 474.9 L1095.5 472.9 L1095.4 470.7 L1094.6 469.0 L1092.9 468.0 L1091.5 467.3 L1090.3 466.7 L1089.3 466.1 L1088.3 465.2 L1087.3 464.1 L1086.5 462.5 L1085.7 460.5 L1084.9 458.2 L1082.3 457.2 L1080.0 456.0 L1078.2 454.5 L1077.1 452.7 L1076.4 451.0 L1076.0 449.3 L1075.8 447.7 L1075.1 446.5 L1073.7 445.5 L1072.3 444.3 L1071.2 442.6 L1070.4 440.6 L1070.3 438.3 L1070.6 436.0 L1071.2 433.7 L1070.5 431.9 L1069.4 430.3 L1068.6 428.7 L1068.2 427.2 L1068.0 425.8 L1067.9 424.4 L1067.9 422.9 L1067.7 421.2 L1067.4 419.2 L1065.9 418.0 L1063.9 417.2 L1062.2 416.1 L1060.8 414.7 L1059.9 413.1 L1059.4 411.3 L1059.2 409.3 L1059.4 407.4 L1059.1 405.8 L1058.0 404.5 L1057.4 403.0 L1057.2 401.4 L1057.3 399.9 L1057.8 398.4 L1058.4 397.1 L1059.3 395.8 L1060.3 394.4 L1061.6 392.9 L1061.6 391.1 L1061.2 389.2 L1061.1 387.3 L1061.4 385.4 L1062.3 383.8 L1063.6 382.5 L1065.2 381.5 L1066.9 380.7 L1068.5 379.8 L1068.6 378.1 L1068.1 376.8 L1067.3 375.8 L1066.6 375.0 L1065.7 374.0 L1065.0 372.9 L1064.4 371.6 L1064.0 370.1 L1063.7 368.3 L1063.5 366.4 L1063.0 364.7 L1061.5 363.5 L1060.3 362.1 L1059.7 360.5 L1059.4 358.9 L1059.6 357.2 L1060.2 355.6 L1061.1 354.3 L1062.1 353.0 L1063.3 352.0 L1063.7 350.8 L1063.8 349.3 L1064.0 347.8 L1064.4 346.4 L1065.0 345.2 L1065.8 344.1 L1066.8 343.4 L1067.8 342.8 L1068.9 342.4 L1070.3 341.9 L1072.0 341.3 L1073.5 340.1 L1074.0 337.7 L1074.7 335.4 L1075.9 333.2 L1077.6 331.4 L1079.9 330.0 L1082.5 328.6 L1083.2 325.6 L1084.3 322.8 L1086.0 320.5 L1088.2 318.8 L1090.6 317.3 L1091.4 315.1 L1091.1 312.7 L1091.0 310.5 L1091.2 308.4 L1092.1 306.4 L1093.6 304.8 L1095.5 303.6 L1096.9 302.0 L1097.4 299.8 L1098.3 297.8 L1099.6 296.1 L1101.3 294.9 L1103.1 294.3 L1105.2 294.1 L1107.2 294.4 L1108.8 293.5 L1110.2 292.2 L1111.8 291.1 L1113.5 290.3 L1115.5 290.1 L1117.3 290.3 L1119.1 290.7 L1120.9 291.1 L1122.8 290.9 L1123.2 289.2 L1123.0 287.5 L1122.7 285.9 L1122.5 284.2 L1122.9 282.5 L1124.1 281.0 L1125.8 280.3 L1127.6 280.2 L1129.5 280.5 L1131.4 280.7 L1133.1 279.4 L1134.8 278.2 L1136.9 277.3 L1139.2 277.0 L1141.7 277.3 L1144.1 278.0 L1146.3 278.1 L1148.0 276.9 L1149.2 276.0 L1150.2 275.3 L1151.1 274.8 L1151.8 274.5 L1152.6 274.1 L1153.4 273.9 L1154.2 273.6 L1155.2 273.1 L1156.2 272.7 L1157.3 272.4 L1158.1 272.6Z" fill="rgba(152,187,74,0.41)" clip-path="url(#ccrape)"/><circle cx="1217.5" cy="567.5" r="14.8" fill="#7dc840" stroke="#55555f" stroke-width="1.100"/><path d="M1222.4 610.5 L1220.0 612.5 L1222.3 614.8 L1219.5 616.4 L1221.7 619.1 L1217.8 620.0 L1219.5 622.9 L1217.1 624.0 L1217.8 626.8 L1214.4 627.0 L1216.1 630.9 L1212.2 630.3 L1212.9 634.0 L1209.3 633.0 L1209.4 636.5 L1205.8 634.9 L1205.7 638.8 L1202.7 637.5 L1201.6 640.4 L1198.9 638.7 L1197.5 641.7 L1194.9 638.7 L1193.2 642.4 L1191.0 639.6 L1188.9 641.9 L1187.1 638.7 L1184.5 642.0 L1183.2 638.4 L1180.3 640.6 L1179.3 637.5 L1176.3 638.9 L1175.7 635.7 L1172.8 636.3 L1172.5 633.3 L1169.4 633.6 L1169.4 630.6 L1166.1 630.8 L1167.7 626.9 L1164.3 626.7 L1165.6 623.7 L1161.4 623.4 L1163.8 620.2 L1160.3 619.1 L1162.9 616.3 L1159.6 614.8 L1162.2 612.5 L1159.5 610.5 L1162.0 608.5 L1159.5 606.2 L1162.2 604.5 L1160.3 601.9 L1163.2 600.6 L1161.5 597.7 L1164.7 596.9 L1163.7 593.9 L1167.7 594.0 L1166.1 590.2 L1169.4 590.3 L1169.0 587.0 L1172.7 588.0 L1172.6 584.4 L1176.1 586.0 L1176.2 582.0 L1179.4 583.8 L1180.5 580.9 L1183.3 583.1 L1184.5 579.0 L1187.0 581.2 L1188.9 579.4 L1191.0 581.2 L1193.2 579.0 L1194.9 582.2 L1197.4 579.7 L1198.9 582.3 L1201.8 580.2 L1202.3 584.4 L1205.6 582.2 L1205.8 586.2 L1209.4 584.4 L1209.2 588.2 L1212.9 587.0 L1212.6 590.3 L1215.6 590.5 L1215.2 593.4 L1217.9 594.1 L1216.3 597.4 L1220.2 597.8 L1217.8 601.0 L1221.2 602.0 L1219.3 604.6 L1222.5 606.2 L1219.5 608.6Z" fill="#308028" stroke="#041204" stroke-width="1.7" stroke-linejoin="round"/><path d="M1191.0 610.5L1219.4 612.5M1191.0 610.5L1218.1 617.9M1191.0 610.5L1193.3 639.9M1191.0 610.5L1182.2 637.0M1191.0 610.5L1180.1 636.2M1191.0 610.5L1169.9 630.9M1191.0 610.5L1165.6 622.2M1191.0 610.5L1163.5 617.5M1191.0 610.5L1163.2 609.3M1191.0 610.5L1162.6 606.9M1191.0 610.5L1163.5 606.8M1191.0 610.5L1164.6 602.2M1191.0 610.5L1163.6 599.8M1191.0 610.5L1166.8 593.9M1191.0 610.5L1170.7 591.4M1191.0 610.5L1174.2 589.2M1191.0 610.5L1185.6 582.1M1191.0 610.5L1210.1 589.6M1191.0 610.5L1213.3 593.6M1191.0 610.5L1217.7 600.0M1191.0 610.5L1218.6 603.2M1191.0 610.5L1219.4 606.5" stroke="#041204" stroke-width="1.7" fill="none"/><path d="M1191.4 651.0 L1188.4 652.9 L1191.3 655.3 L1188.0 656.8 L1190.0 659.4 L1187.2 660.7 L1189.5 663.8 L1186.1 664.5 L1187.4 667.6 L1183.4 667.5 L1184.6 671.0 L1181.0 670.6 L1181.4 673.9 L1178.0 673.1 L1178.1 676.6 L1175.3 676.2 L1174.8 679.5 L1171.7 677.9 L1170.7 681.2 L1167.7 678.6 L1166.4 681.8 L1164.0 679.9 L1162.2 682.9 L1160.0 680.4 L1157.8 683.1 L1156.1 679.2 L1153.5 682.2 L1152.1 679.1 L1149.4 680.9 L1148.6 677.2 L1145.4 679.1 L1145.2 675.3 L1141.4 677.3 L1141.4 673.8 L1138.3 674.2 L1139.0 670.6 L1135.0 671.3 L1136.3 667.8 L1132.5 667.7 L1133.9 664.5 L1130.9 663.6 L1132.8 660.7 L1129.4 659.6 L1131.7 656.9 L1129.0 655.3 L1131.3 653.0 L1127.9 651.0 L1131.6 649.1 L1129.1 646.8 L1131.5 645.1 L1129.7 642.5 L1132.7 641.3 L1131.0 638.4 L1134.4 637.8 L1132.4 634.2 L1136.6 634.5 L1135.5 631.1 L1139.1 631.5 L1138.3 627.7 L1141.9 628.7 L1141.8 625.2 L1144.8 626.0 L1145.5 623.0 L1148.4 624.4 L1149.2 620.7 L1152.3 623.6 L1153.7 620.5 L1156.1 622.6 L1157.8 619.1 L1160.0 621.9 L1162.1 619.7 L1163.9 622.5 L1166.4 620.3 L1167.8 623.1 L1170.4 621.6 L1171.6 624.2 L1174.8 622.4 L1175.3 625.8 L1178.4 624.9 L1178.6 628.1 L1181.2 628.3 L1181.0 631.4 L1185.0 630.6 L1183.9 634.1 L1187.0 634.6 L1186.2 637.4 L1189.2 638.3 L1187.7 641.2 L1190.3 642.5 L1188.0 645.2 L1191.3 646.7 L1188.5 649.1Z" fill="#308028" stroke="#041204" stroke-width="1.7" stroke-linejoin="round"/><path d="M1160.0 651.0L1189.1 652.7M1160.0 651.0L1187.3 658.2M1160.0 651.0L1186.5 658.7M1160.0 651.0L1186.8 660.7M1160.0 651.0L1185.2 660.8M1160.0 651.0L1183.2 667.2M1160.0 651.0L1177.0 674.3M1160.0 651.0L1173.9 675.8M1160.0 651.0L1174.2 676.7M1160.0 651.0L1167.4 678.5M1160.0 651.0L1160.2 679.9M1160.0 651.0L1153.2 677.4M1160.0 651.0L1146.6 674.9M1160.0 651.0L1141.6 672.5M1160.0 651.0L1138.3 670.9M1160.0 651.0L1134.4 664.3M1160.0 651.0L1131.2 652.7M1160.0 651.0L1147.1 625.0M1160.0 651.0L1166.1 622.7M1160.0 651.0L1186.5 644.5M1160.0 651.0L1189.0 647.7M1160.0 651.0L1189.4 650.6" stroke="#041204" stroke-width="1.7" fill="none"/><circle cx="1178" cy="707" r="14.8" fill="#7dc840" stroke="#55555f" stroke-width="1.100"/><circle cx="1157" cy="694" r="14.8" fill="#7dc840" stroke="#55555f" stroke-width="1.100"/><clipPath id="cf1"><circle cx="1466" cy="495.5" r="36"/></clipPath><path d="M1501.2 495.5L1503.1 498.4L1500.8 501.0L1502.2 504.2L1499.5 506.4L1500.4 509.7L1497.4 511.5L1497.7 514.9L1494.5 516.2L1494.3 519.7L1490.9 520.4L1490.2 523.8L1486.7 524.0L1485.4 527.2L1482.0 526.9L1480.2 529.9L1476.9 529.0L1474.7 531.7L1471.5 530.3L1468.9 532.6L1466.0 530.7L1463.1 532.6L1460.5 530.3L1457.3 531.7L1455.1 529.0L1451.8 529.9L1450.0 526.9L1446.6 527.2L1445.3 524.0L1441.8 523.8L1441.1 520.4L1437.7 519.7L1437.5 516.2L1434.3 514.9L1434.6 511.5L1431.6 509.7L1432.5 506.4L1429.8 504.2L1431.2 501.0L1428.9 498.4L1430.8 495.5L1428.9 492.6L1431.2 490.0L1429.8 486.8L1432.5 484.6L1431.6 481.3L1434.6 479.5L1434.3 476.1L1437.5 474.8L1437.7 471.3L1441.1 470.6L1441.8 467.2L1445.3 467.0L1446.6 463.8L1450.0 464.1L1451.8 461.1L1455.1 462.0L1457.3 459.3L1460.5 460.7L1463.1 458.4L1466.0 460.3L1468.9 458.4L1471.5 460.7L1474.7 459.3L1476.9 462.0L1480.2 461.1L1482.0 464.1L1485.4 463.8L1486.7 467.0L1490.2 467.2L1490.9 470.6L1494.3 471.3L1494.5 474.8L1497.7 476.1L1497.4 479.5L1500.4 481.3L1499.5 484.6L1502.2 486.8L1500.8 490.0L1503.1 492.6L1501.2 495.5Z" fill="#519e1f" stroke="#061803" stroke-width="1.500" stroke-linejoin="round"/><path d="M1466.0 495.5L1502.0 494.2M1466.0 495.5L1501.1 503.3M1466.0 495.5L1499.2 509.4M1466.0 495.5L1497.1 513.7M1466.0 495.5L1492.6 519.7M1466.0 495.5L1487.8 524.1M1466.0 495.5L1481.6 528.0M1466.0 495.5L1474.8 530.4M1466.0 495.5L1470.8 531.2M1466.0 495.5L1464.4 531.5M1466.0 495.5L1455.0 529.8M1466.0 495.5L1450.2 527.8M1466.0 495.5L1443.6 523.6M1466.0 495.5L1440.6 521.0M1466.0 495.5L1435.5 514.6M1466.0 495.5L1432.2 507.8M1466.0 495.5L1430.8 503.1M1466.0 495.5L1430.0 493.9M1466.0 495.5L1430.9 487.5M1466.0 495.5L1431.9 484.1M1466.0 495.5L1434.5 478.0M1466.0 495.5L1439.5 471.1M1466.0 495.5L1445.6 465.8M1466.0 495.5L1449.6 463.5M1466.0 495.5L1455.2 461.2M1466.0 495.5L1462.4 459.7M1466.0 495.5L1467.6 459.5M1466.0 495.5L1474.9 460.6M1466.0 495.5L1481.8 463.2M1466.0 495.5L1487.7 466.8M1466.0 495.5L1491.9 470.5M1466.0 495.5L1496.1 475.7M1466.0 495.5L1499.2 481.6M1466.0 495.5L1501.4 488.7" stroke="#061803" stroke-width="1.100" fill="none"/><g clip-path="url(#cf1)" fill="#6ab62a" stroke="#061803" stroke-width="1.200" stroke-linejoin="round"><path d="M1470.4 496.8 L1501.0 483.0 L1498.5 477.6 L1468.0 491.3Z"/><path d="M1469.0 493.3 L1470.9 458.7 L1465.1 458.4 L1463.2 493.0Z"/><path d="M1461.9 494.5 L1431.7 509.7 L1434.2 514.5 L1464.4 499.3Z"/><path d="M1464.4 498.6 L1478.2 530.5 L1483.0 528.4 L1469.3 496.5Z"/><path d="M1468.3 493.0 L1455.8 459.8 L1450.1 462.0 L1462.6 495.2Z"/><path d="M1462.1 497.3 L1449.5 528.7 L1454.9 530.9 L1467.5 499.5Z"/><path d="M1469.4 494.8 L1482.9 462.4 L1477.7 460.3 L1464.2 492.6Z"/><path d="M1463.7 498.5 L1466.2 532.6 L1471.3 532.2 L1468.7 498.1Z"/><path d="M1464.8 498.6 L1487.8 525.5 L1492.4 521.6 L1469.3 494.8Z"/><path d="M1468.7 499.5 L1499.9 510.6 L1501.8 505.1 L1470.7 494.1Z"/><path d="M1465.8 491.0 L1443.1 466.3 L1438.8 470.2 L1461.5 494.9Z"/><path d="M1462.1 492.8 L1428.9 494.1 L1429.2 500.0 L1462.3 498.6Z"/><path d="M1463.2 494.2 L1437.5 519.3 L1441.5 523.4 L1467.2 498.3Z"/><path d="M1466.0 498.8 L1503.0 499.0 L1503.0 492.5 L1466.0 492.2Z"/><path d="M1470.7 495.4 L1495.4 472.9 L1491.2 468.2 L1466.5 490.8Z"/><path d="M1465.4 491.8 L1433.7 477.2 L1431.1 482.9 L1462.8 497.5Z"/></g><path d="M1501.2 495.5L1503.1 498.4L1500.8 501.0L1502.2 504.2L1499.5 506.4L1500.4 509.7L1497.4 511.5L1497.7 514.9L1494.5 516.2L1494.3 519.7L1490.9 520.4L1490.2 523.8L1486.7 524.0L1485.4 527.2L1482.0 526.9L1480.2 529.9L1476.9 529.0L1474.7 531.7L1471.5 530.3L1468.9 532.6L1466.0 530.7L1463.1 532.6L1460.5 530.3L1457.3 531.7L1455.1 529.0L1451.8 529.9L1450.0 526.9L1446.6 527.2L1445.3 524.0L1441.8 523.8L1441.1 520.4L1437.7 519.7L1437.5 516.2L1434.3 514.9L1434.6 511.5L1431.6 509.7L1432.5 506.4L1429.8 504.2L1431.2 501.0L1428.9 498.4L1430.8 495.5L1428.9 492.6L1431.2 490.0L1429.8 486.8L1432.5 484.6L1431.6 481.3L1434.6 479.5L1434.3 476.1L1437.5 474.8L1437.7 471.3L1441.1 470.6L1441.8 467.2L1445.3 467.0L1446.6 463.8L1450.0 464.1L1451.8 461.1L1455.1 462.0L1457.3 459.3L1460.5 460.7L1463.1 458.4L1466.0 460.3L1468.9 458.4L1471.5 460.7L1474.7 459.3L1476.9 462.0L1480.2 461.1L1482.0 464.1L1485.4 463.8L1486.7 467.0L1490.2 467.2L1490.9 470.6L1494.3 471.3L1494.5 474.8L1497.7 476.1L1497.4 479.5L1500.4 481.3L1499.5 484.6L1502.2 486.8L1500.8 490.0L1503.1 492.6L1501.2 495.5Z" fill="none" stroke="#061803" stroke-width="1.400" stroke-linejoin="round"/><clipPath id="cf2"><circle cx="1537" cy="483.5" r="36.5"/></clipPath><path d="M1572.7 483.5L1574.6 486.5L1572.3 489.1L1573.7 492.3L1571.0 494.5L1571.8 497.9L1568.8 499.7L1569.1 503.2L1565.9 504.5L1565.7 508.0L1562.2 508.7L1561.5 512.2L1558.0 512.4L1556.7 515.6L1553.2 515.3L1551.4 518.3L1548.0 517.5L1545.8 520.2L1542.6 518.8L1540.0 521.1L1537.0 519.2L1534.0 521.1L1531.4 518.8L1528.2 520.2L1526.0 517.5L1522.6 518.3L1520.8 515.3L1517.3 515.6L1516.0 512.4L1512.5 512.2L1511.8 508.7L1508.3 508.0L1508.1 504.5L1504.9 503.2L1505.2 499.7L1502.2 497.9L1503.0 494.5L1500.3 492.3L1501.7 489.1L1499.4 486.5L1501.3 483.5L1499.4 480.5L1501.7 477.9L1500.3 474.7L1503.0 472.5L1502.2 469.1L1505.2 467.3L1504.9 463.8L1508.1 462.5L1508.3 459.0L1511.8 458.3L1512.5 454.8L1516.0 454.6L1517.3 451.4L1520.8 451.7L1522.6 448.7L1526.0 449.5L1528.2 446.8L1531.4 448.2L1534.0 445.9L1537.0 447.8L1540.0 445.9L1542.6 448.2L1545.8 446.8L1548.0 449.5L1551.4 448.7L1553.2 451.7L1556.7 451.4L1558.0 454.6L1561.5 454.8L1562.2 458.3L1565.7 459.0L1565.9 462.5L1569.1 463.8L1568.8 467.3L1571.8 469.1L1571.0 472.5L1573.7 474.7L1572.3 477.9L1574.6 480.5L1572.7 483.5Z" fill="#519e1f" stroke="#061803" stroke-width="1.500" stroke-linejoin="round"/><path d="M1537.0 483.5L1573.5 485.2M1537.0 483.5L1572.5 491.8M1537.0 483.5L1571.6 495.2M1537.0 483.5L1568.8 501.4M1537.0 483.5L1563.1 509.0M1537.0 483.5L1558.3 513.1M1537.0 483.5L1552.7 516.4M1537.0 483.5L1547.7 518.4M1537.0 483.5L1540.0 519.9M1537.0 483.5L1533.2 519.8M1537.0 483.5L1526.7 518.5M1537.0 483.5L1521.9 516.7M1537.0 483.5L1515.2 512.8M1537.0 483.5L1510.3 508.4M1537.0 483.5L1505.5 502.0M1537.0 483.5L1502.4 495.0M1537.0 483.5L1500.9 488.6M1537.0 483.5L1500.5 483.3M1537.0 483.5L1501.1 477.0M1537.0 483.5L1502.7 471.1M1537.0 483.5L1505.1 465.7M1537.0 483.5L1508.9 460.2M1537.0 483.5L1514.9 454.4M1537.0 483.5L1520.1 451.1M1537.0 483.5L1526.6 448.5M1537.0 483.5L1535.1 447.1M1537.0 483.5L1540.5 447.2M1537.0 483.5L1547.2 448.5M1537.0 483.5L1552.4 450.4M1537.0 483.5L1557.6 453.4M1537.0 483.5L1563.5 458.4M1537.0 483.5L1567.3 463.2M1537.0 483.5L1571.0 470.3M1537.0 483.5L1573.2 478.6" stroke="#061803" stroke-width="1.100" fill="none"/><g clip-path="url(#cf2)" fill="#6ab62a" stroke="#061803" stroke-width="1.200" stroke-linejoin="round"><path d="M1538.1 486.2 L1574.4 487.1 L1574.6 481.7 L1538.2 480.8Z"/><path d="M1534.1 486.7 L1534.1 521.0 L1539.9 521.0 L1539.9 486.7Z"/><path d="M1537.4 488.1 L1560.8 512.7 L1564.9 508.7 L1541.6 484.1Z"/><path d="M1540.7 482.5 L1553.4 449.6 L1547.7 447.4 L1534.9 480.3Z"/><path d="M1539.3 487.7 L1570.6 500.4 L1572.9 494.8 L1541.6 482.1Z"/><path d="M1535.2 487.9 L1546.6 519.9 L1552.6 517.7 L1541.2 485.7Z"/><path d="M1539.2 480.6 L1526.2 447.5 L1520.4 449.7 L1533.4 482.9Z"/><path d="M1536.7 478.9 L1511.8 455.5 L1507.5 460.1 L1532.4 483.5Z"/><path d="M1535.9 479.9 L1503.6 466.1 L1501.4 471.5 L1533.6 485.2Z"/><path d="M1540.0 485.6 L1572.7 471.5 L1570.2 465.8 L1537.6 479.9Z"/><path d="M1533.4 480.5 L1499.4 481.2 L1499.6 487.3 L1533.5 486.6Z"/><path d="M1535.1 481.5 L1507.5 506.8 L1511.2 510.9 L1538.8 485.6Z"/><path d="M1540.3 483.2 L1542.1 446.2 L1535.6 445.9 L1533.7 482.9Z"/><path d="M1533.9 482.0 L1501.2 495.1 L1503.1 499.8 L1535.7 486.7Z"/><path d="M1541.4 483.8 L1566.5 460.1 L1562.0 455.4 L1537.0 479.1Z"/><path d="M1533.4 485.7 L1522.1 518.0 L1527.2 519.8 L1538.5 487.5Z"/></g><path d="M1572.7 483.5L1574.6 486.5L1572.3 489.1L1573.7 492.3L1571.0 494.5L1571.8 497.9L1568.8 499.7L1569.1 503.2L1565.9 504.5L1565.7 508.0L1562.2 508.7L1561.5 512.2L1558.0 512.4L1556.7 515.6L1553.2 515.3L1551.4 518.3L1548.0 517.5L1545.8 520.2L1542.6 518.8L1540.0 521.1L1537.0 519.2L1534.0 521.1L1531.4 518.8L1528.2 520.2L1526.0 517.5L1522.6 518.3L1520.8 515.3L1517.3 515.6L1516.0 512.4L1512.5 512.2L1511.8 508.7L1508.3 508.0L1508.1 504.5L1504.9 503.2L1505.2 499.7L1502.2 497.9L1503.0 494.5L1500.3 492.3L1501.7 489.1L1499.4 486.5L1501.3 483.5L1499.4 480.5L1501.7 477.9L1500.3 474.7L1503.0 472.5L1502.2 469.1L1505.2 467.3L1504.9 463.8L1508.1 462.5L1508.3 459.0L1511.8 458.3L1512.5 454.8L1516.0 454.6L1517.3 451.4L1520.8 451.7L1522.6 448.7L1526.0 449.5L1528.2 446.8L1531.4 448.2L1534.0 445.9L1537.0 447.8L1540.0 445.9L1542.6 448.2L1545.8 446.8L1548.0 449.5L1551.4 448.7L1553.2 451.7L1556.7 451.4L1558.0 454.6L1561.5 454.8L1562.2 458.3L1565.7 459.0L1565.9 462.5L1569.1 463.8L1568.8 467.3L1571.8 469.1L1571.0 472.5L1573.7 474.7L1572.3 477.9L1574.6 480.5L1572.7 483.5Z" fill="none" stroke="#061803" stroke-width="1.400" stroke-linejoin="round"/><clipPath id="cf3"><circle cx="1431" cy="568" r="36"/></clipPath><path d="M1466.2 568.0L1468.1 570.9L1465.8 573.5L1467.2 576.7L1464.5 578.9L1465.4 582.2L1462.4 584.0L1462.7 587.4L1459.5 588.7L1459.3 592.2L1455.9 592.9L1455.2 596.3L1451.7 596.5L1450.4 599.7L1447.0 599.4L1445.2 602.4L1441.9 601.5L1439.7 604.2L1436.5 602.8L1433.9 605.1L1431.0 603.2L1428.1 605.1L1425.5 602.8L1422.3 604.2L1420.1 601.5L1416.8 602.4L1415.0 599.4L1411.6 599.7L1410.3 596.5L1406.8 596.3L1406.1 592.9L1402.7 592.2L1402.5 588.7L1399.3 587.4L1399.6 584.0L1396.6 582.2L1397.5 578.9L1394.8 576.7L1396.2 573.5L1393.9 570.9L1395.8 568.0L1393.9 565.1L1396.2 562.5L1394.8 559.3L1397.5 557.1L1396.6 553.8L1399.6 552.0L1399.3 548.6L1402.5 547.3L1402.7 543.8L1406.1 543.1L1406.8 539.7L1410.3 539.5L1411.6 536.3L1415.0 536.6L1416.8 533.6L1420.1 534.5L1422.3 531.8L1425.5 533.2L1428.1 530.9L1431.0 532.8L1433.9 530.9L1436.5 533.2L1439.7 531.8L1441.9 534.5L1445.2 533.6L1447.0 536.6L1450.4 536.3L1451.7 539.5L1455.2 539.7L1455.9 543.1L1459.3 543.8L1459.5 547.3L1462.7 548.6L1462.4 552.0L1465.4 553.8L1464.5 557.1L1467.2 559.3L1465.8 562.5L1468.1 565.1L1466.2 568.0Z" fill="#519e1f" stroke="#061803" stroke-width="1.500" stroke-linejoin="round"/><path d="M1431.0 568.0L1467.0 567.1M1431.0 568.0L1466.4 574.8M1431.0 568.0L1464.7 580.6M1431.0 568.0L1461.4 587.3M1431.0 568.0L1457.3 592.6M1431.0 568.0L1453.9 595.8M1431.0 568.0L1448.6 599.4M1431.0 568.0L1439.7 602.9M1431.0 568.0L1435.2 603.8M1431.0 568.0L1428.6 603.9M1431.0 568.0L1419.4 602.1M1431.0 568.0L1415.0 600.3M1431.0 568.0L1408.4 596.0M1431.0 568.0L1404.5 592.3M1431.0 568.0L1400.1 586.5M1431.0 568.0L1397.9 582.2M1431.0 568.0L1395.5 574.1M1431.0 568.0L1395.0 566.7M1431.0 568.0L1395.6 561.3M1431.0 568.0L1397.8 554.2M1431.0 568.0L1400.7 548.5M1431.0 568.0L1403.4 544.9M1431.0 568.0L1410.1 538.7M1431.0 568.0L1415.2 535.6M1431.0 568.0L1420.5 533.6M1431.0 568.0L1426.0 532.3M1431.0 568.0L1435.6 532.3M1431.0 568.0L1440.8 533.3M1431.0 568.0L1447.7 536.1M1431.0 568.0L1453.8 540.1M1431.0 568.0L1458.1 544.3M1431.0 568.0L1462.4 550.4M1431.0 568.0L1464.4 554.6M1431.0 568.0L1466.6 562.5" stroke="#061803" stroke-width="1.100" fill="none"/><g clip-path="url(#cf3)" fill="#6ab62a" stroke="#061803" stroke-width="1.200" stroke-linejoin="round"><path d="M1432.0 564.8 L1407.2 539.5 L1403.0 543.6 L1427.8 568.9Z"/><path d="M1428.4 571.8 L1429.8 605.1 L1435.3 604.9 L1433.9 571.5Z"/><path d="M1432.3 564.6 L1416.8 533.7 L1411.9 536.2 L1427.5 567.1Z"/><path d="M1428.0 566.7 L1402.0 591.1 L1406.1 595.6 L1432.1 571.1Z"/><path d="M1430.6 565.0 L1394.0 564.8 L1394.0 570.7 L1430.6 571.0Z"/><path d="M1434.1 564.1 L1434.9 531.1 L1428.9 530.9 L1428.1 564.0Z"/><path d="M1430.1 564.9 L1397.2 552.7 L1395.4 557.5 L1428.3 569.8Z"/><path d="M1428.8 570.3 L1441.7 603.5 L1447.1 601.4 L1434.2 568.2Z"/><path d="M1429.5 565.2 L1396.4 581.6 L1399.3 587.3 L1432.4 570.9Z"/><path d="M1433.8 568.6 L1447.4 534.7 L1442.1 532.6 L1428.5 566.5Z"/><path d="M1432.5 571.1 L1467.9 571.7 L1468.0 565.5 L1432.6 564.9Z"/><path d="M1433.2 572.2 L1463.8 585.3 L1466.2 579.9 L1435.5 566.8Z"/><path d="M1428.4 567.2 L1415.5 601.7 L1420.6 603.6 L1433.5 569.1Z"/><path d="M1430.9 571.4 L1457.4 594.0 L1460.8 590.1 L1434.3 567.4Z"/><path d="M1433.1 570.7 L1467.1 559.4 L1465.1 553.2 L1431.1 564.5Z"/><path d="M1435.9 567.2 L1458.4 543.0 L1453.9 538.8 L1431.4 563.1Z"/></g><path d="M1466.2 568.0L1468.1 570.9L1465.8 573.5L1467.2 576.7L1464.5 578.9L1465.4 582.2L1462.4 584.0L1462.7 587.4L1459.5 588.7L1459.3 592.2L1455.9 592.9L1455.2 596.3L1451.7 596.5L1450.4 599.7L1447.0 599.4L1445.2 602.4L1441.9 601.5L1439.7 604.2L1436.5 602.8L1433.9 605.1L1431.0 603.2L1428.1 605.1L1425.5 602.8L1422.3 604.2L1420.1 601.5L1416.8 602.4L1415.0 599.4L1411.6 599.7L1410.3 596.5L1406.8 596.3L1406.1 592.9L1402.7 592.2L1402.5 588.7L1399.3 587.4L1399.6 584.0L1396.6 582.2L1397.5 578.9L1394.8 576.7L1396.2 573.5L1393.9 570.9L1395.8 568.0L1393.9 565.1L1396.2 562.5L1394.8 559.3L1397.5 557.1L1396.6 553.8L1399.6 552.0L1399.3 548.6L1402.5 547.3L1402.7 543.8L1406.1 543.1L1406.8 539.7L1410.3 539.5L1411.6 536.3L1415.0 536.6L1416.8 533.6L1420.1 534.5L1422.3 531.8L1425.5 533.2L1428.1 530.9L1431.0 532.8L1433.9 530.9L1436.5 533.2L1439.7 531.8L1441.9 534.5L1445.2 533.6L1447.0 536.6L1450.4 536.3L1451.7 539.5L1455.2 539.7L1455.9 543.1L1459.3 543.8L1459.5 547.3L1462.7 548.6L1462.4 552.0L1465.4 553.8L1464.5 557.1L1467.2 559.3L1465.8 562.5L1468.1 565.1L1466.2 568.0Z" fill="none" stroke="#061803" stroke-width="1.400" stroke-linejoin="round"/><g fill="#2f8030" stroke="#061206" stroke-width="1.400" stroke-linejoin="round"><path d="M-2 -12L4 -11L5 -6L11 -8L14 -3L8 -1L6 3L12 7L9 12L4 9L1 4L-3 6L-4 12L-10 12L-8 5L-5 1L-11 1L-14 -4L-8 -6L-4 -4Z" transform="translate(1457.7 520.4) rotate(300) scale(-1.21 1.21)"/><path d="M-2 -12L4 -11L5 -6L11 -8L14 -3L8 -1L6 3L12 7L9 12L4 9L1 4L-3 6L-4 12L-10 12L-8 5L-5 1L-11 1L-14 -4L-8 -6L-4 -4Z" transform="translate(1476.0 535.6) rotate(300) scale(1.10 1.10)"/><path d="M-2 -12L4 -11L5 -6L11 -8L14 -3L8 -1L6 3L12 7L9 12L4 9L1 4L-3 6L-4 12L-10 12L-8 5L-5 1L-11 1L-14 -4L-8 -6L-4 -4Z" transform="translate(1481.5 554.0) rotate(70) scale(-1.19 1.19)"/><path d="M-2 -12L4 -11L5 -6L11 -8L14 -3L8 -1L6 3L12 7L9 12L4 9L1 4L-3 6L-4 12L-10 12L-8 5L-5 1L-11 1L-14 -4L-8 -6L-4 -4Z" transform="translate(1515.5 520.0) rotate(70) scale(-0.98 0.98)"/><path d="M-2 -12L4 -11L5 -6L11 -8L14 -3L8 -1L6 3L12 7L9 12L4 9L1 4L-3 6L-4 12L-10 12L-8 5L-5 1L-11 1L-14 -4L-8 -6L-4 -4Z" transform="translate(1512.0 544.0) rotate(70) scale(0.98 0.98)"/><path d="M-2 -12L4 -11L5 -6L11 -8L14 -3L8 -1L6 3L12 7L9 12L4 9L1 4L-3 6L-4 12L-10 12L-8 5L-5 1L-11 1L-14 -4L-8 -6L-4 -4Z" transform="translate(1546.0 547.5) rotate(250) scale(1.24 1.24)"/><path d="M-2 -12L4 -11L5 -6L11 -8L14 -3L8 -1L6 3L12 7L9 12L4 9L1 4L-3 6L-4 12L-10 12L-8 5L-5 1L-11 1L-14 -4L-8 -6L-4 -4Z" transform="translate(1542.6 576.0) rotate(0) scale(1.20 1.20)"/><path d="M-2 -12L4 -11L5 -6L11 -8L14 -3L8 -1L6 3L12 7L9 12L4 9L1 4L-3 6L-4 12L-10 12L-8 5L-5 1L-11 1L-14 -4L-8 -6L-4 -4Z" transform="translate(1569.8 585.0) rotate(0) scale(0.96 0.96)"/><path d="M-2 -12L4 -11L5 -6L11 -8L14 -3L8 -1L6 3L12 7L9 12L4 9L1 4L-3 6L-4 12L-10 12L-8 5L-5 1L-11 1L-14 -4L-8 -6L-4 -4Z" transform="translate(1439.0 574.7) rotate(0) scale(-1.18 1.18)"/><path d="M-2 -12L4 -11L5 -6L11 -8L14 -3L8 -1L6 3L12 7L9 12L4 9L1 4L-3 6L-4 12L-10 12L-8 5L-5 1L-11 1L-14 -4L-8 -6L-4 -4Z" transform="translate(1456.0 583.0) rotate(300) scale(1.13 1.13)"/><path d="M-2 -12L4 -11L5 -6L11 -8L14 -3L8 -1L6 3L12 7L9 12L4 9L1 4L-3 6L-4 12L-10 12L-8 5L-5 1L-11 1L-14 -4L-8 -6L-4 -4Z" transform="translate(1444.0 613.7) rotate(110) scale(-1.14 1.14)"/><path d="M-2 -12L4 -11L5 -6L11 -8L14 -3L8 -1L6 3L12 7L9 12L4 9L1 4L-3 6L-4 12L-10 12L-8 5L-5 1L-11 1L-14 -4L-8 -6L-4 -4Z" transform="translate(1471.0 647.7) rotate(0) scale(-1.15 1.15)"/><path d="M-2 -12L4 -11L5 -6L11 -8L14 -3L8 -1L6 3L12 7L9 12L4 9L1 4L-3 6L-4 12L-10 12L-8 5L-5 1L-11 1L-14 -4L-8 -6L-4 -4Z" transform="translate(1505.0 644.0) rotate(160) scale(1.07 1.07)"/><path d="M-2 -12L4 -11L5 -6L11 -8L14 -3L8 -1L6 3L12 7L9 12L4 9L1 4L-3 6L-4 12L-10 12L-8 5L-5 1L-11 1L-14 -4L-8 -6L-4 -4Z" transform="translate(1535.8 619.0) rotate(160) scale(1.04 1.04)"/><path d="M-2 -12L4 -11L5 -6L11 -8L14 -3L8 -1L6 3L12 7L9 12L4 9L1 4L-3 6L-4 12L-10 12L-8 5L-5 1L-11 1L-14 -4L-8 -6L-4 -4Z" transform="translate(1542.6 641.0) rotate(160) scale(0.96 0.96)"/><path d="M-2 -12L4 -11L5 -6L11 -8L14 -3L8 -1L6 3L12 7L9 12L4 9L1 4L-3 6L-4 12L-10 12L-8 5L-5 1L-11 1L-14 -4L-8 -6L-4 -4Z" transform="translate(1528.0 532.0) rotate(250) scale(-0.98 0.98)"/><path d="M-2 -12L4 -11L5 -6L11 -8L14 -3L8 -1L6 3L12 7L9 12L4 9L1 4L-3 6L-4 12L-10 12L-8 5L-5 1L-11 1L-14 -4L-8 -6L-4 -4Z" transform="translate(1494.0 532.0) rotate(250) scale(0.97 0.97)"/><path d="M-2 -12L4 -11L5 -6L11 -8L14 -3L8 -1L6 3L12 7L9 12L4 9L1 4L-3 6L-4 12L-10 12L-8 5L-5 1L-11 1L-14 -4L-8 -6L-4 -4Z" transform="translate(1466.0 548.0) rotate(0) scale(1.01 1.01)"/><path d="M-2 -12L4 -11L5 -6L11 -8L14 -3L8 -1L6 3L12 7L9 12L4 9L1 4L-3 6L-4 12L-10 12L-8 5L-5 1L-11 1L-14 -4L-8 -6L-4 -4Z" transform="translate(1524.0 630.0) rotate(300) scale(-1.06 1.06)"/><path d="M-2 -12L4 -11L5 -6L11 -8L14 -3L8 -1L6 3L12 7L9 12L4 9L1 4L-3 6L-4 12L-10 12L-8 5L-5 1L-11 1L-14 -4L-8 -6L-4 -4Z" transform="translate(1556.0 630.0) rotate(250) scale(0.97 0.97)"/></g><path d="M1485 566L1484 583L1498.500 592.500M1504.400 547.500L1505 580L1498.500 592.500M1505 581L1532.400 581.500M1498.500 592.500L1479 602L1479 632.400L1486.600 644M1498.500 592.500L1515.400 608.700L1514.600 629" stroke="#000" stroke-width="3.600" fill="none" stroke-linejoin="round" stroke-linecap="round"/><path d="M1446.3 652.5 L1443.7 654.5 L1446.3 656.8 L1443.4 658.4 L1445.3 661.0 L1442.3 662.2 L1443.1 664.7 L1440.3 665.6 L1442.1 669.0 L1438.4 669.0 L1439.6 672.5 L1435.5 671.6 L1436.3 675.3 L1432.8 674.4 L1433.0 678.0 L1429.8 676.9 L1429.1 679.7 L1426.2 678.3 L1425.4 681.6 L1422.8 680.4 L1421.4 683.4 L1418.8 680.3 L1417.2 684.0 L1415.0 680.5 L1412.9 683.8 L1411.2 680.3 L1408.8 682.5 L1407.2 680.4 L1404.7 681.6 L1403.8 678.3 L1400.4 680.7 L1400.0 677.2 L1397.2 677.8 L1396.7 675.0 L1393.7 675.3 L1394.0 672.1 L1391.1 672.0 L1391.3 669.2 L1388.1 668.8 L1389.2 665.9 L1385.9 665.1 L1388.4 662.0 L1385.1 660.9 L1387.5 658.2 L1384.5 656.7 L1387.1 654.4 L1384.0 652.5 L1386.5 650.5 L1384.7 648.3 L1386.9 646.7 L1385.1 644.1 L1388.4 643.0 L1386.0 639.9 L1389.7 639.4 L1388.5 636.4 L1391.8 636.1 L1390.6 632.7 L1394.6 633.4 L1393.3 629.3 L1397.4 630.9 L1396.8 626.8 L1400.0 627.8 L1400.9 625.3 L1403.5 626.1 L1404.6 623.3 L1407.3 625.0 L1408.8 622.5 L1411.2 624.8 L1412.9 621.8 L1415.0 623.5 L1417.1 621.7 L1418.9 624.0 L1421.5 621.4 L1422.8 624.6 L1425.4 623.3 L1426.3 626.5 L1429.4 624.8 L1430.0 627.9 L1432.7 627.4 L1433.2 630.2 L1436.5 629.4 L1436.1 632.8 L1438.8 633.2 L1438.7 635.8 L1441.2 636.5 L1440.1 639.5 L1443.7 640.0 L1442.3 642.8 L1444.9 644.1 L1443.4 646.6 L1446.0 648.2 L1443.2 650.6Z" fill="#308028" stroke="#041204" stroke-width="1.7" stroke-linejoin="round"/><path d="M1415.0 652.5L1441.6 658.0M1415.0 652.5L1440.4 660.5M1415.0 652.5L1440.8 661.9M1415.0 652.5L1438.8 665.3M1415.0 652.5L1434.6 673.5M1415.0 652.5L1431.6 675.0M1415.0 652.5L1430.1 676.8M1415.0 652.5L1426.8 676.6M1415.0 652.5L1417.2 680.7M1415.0 652.5L1403.6 677.9M1415.0 652.5L1393.0 667.3M1415.0 652.5L1391.3 665.2M1415.0 652.5L1389.5 659.8M1415.0 652.5L1387.2 653.6M1415.0 652.5L1387.8 646.7M1415.0 652.5L1392.4 637.4M1415.0 652.5L1404.6 626.7M1415.0 652.5L1428.0 627.4M1415.0 652.5L1429.8 628.7M1415.0 652.5L1439.7 638.1M1415.0 652.5L1443.0 650.2M1415.0 652.5L1441.5 652.0" stroke="#041204" stroke-width="1.7" fill="none"/><path d="M1480.1 702.0 L1477.3 704.0 L1479.4 706.3 L1476.1 707.8 L1477.9 710.4 L1475.5 711.8 L1477.0 714.6 L1474.0 715.5 L1475.0 718.4 L1471.9 718.9 L1472.4 721.8 L1469.4 722.0 L1469.8 725.4 L1466.2 724.4 L1466.3 727.9 L1463.2 726.9 L1462.4 729.8 L1459.6 728.6 L1458.7 732.2 L1455.7 729.6 L1454.5 733.4 L1452.0 730.9 L1450.2 734.0 L1448.0 730.8 L1445.9 733.1 L1444.0 731.1 L1441.5 733.4 L1440.2 729.8 L1437.5 731.4 L1436.6 728.2 L1433.3 730.3 L1433.1 726.5 L1429.4 728.3 L1429.6 724.6 L1426.6 724.9 L1426.7 721.9 L1423.5 721.9 L1423.9 719.0 L1420.5 718.7 L1422.3 715.3 L1418.8 714.7 L1420.5 711.8 L1417.1 710.7 L1419.1 708.0 L1417.2 706.2 L1419.3 704.0 L1416.2 702.0 L1419.3 700.0 L1416.5 697.7 L1420.1 696.2 L1417.0 693.3 L1420.7 692.3 L1419.3 689.6 L1422.1 688.6 L1421.1 685.6 L1424.6 685.5 L1423.4 682.0 L1427.1 682.5 L1426.6 679.1 L1429.4 679.2 L1429.6 675.9 L1433.2 677.7 L1433.3 673.6 L1436.7 676.0 L1437.5 672.3 L1440.1 673.6 L1441.5 670.8 L1444.1 673.5 L1445.8 670.5 L1448.0 673.2 L1450.1 670.8 L1452.0 672.7 L1454.3 671.5 L1455.8 674.2 L1458.7 671.9 L1459.5 675.5 L1462.8 673.3 L1462.9 677.5 L1466.6 675.6 L1466.6 679.2 L1469.8 678.7 L1469.5 681.9 L1472.5 682.0 L1472.0 685.1 L1475.4 685.3 L1473.7 688.7 L1477.0 689.4 L1475.5 692.2 L1478.4 693.5 L1475.9 696.2 L1479.7 697.6 L1476.6 700.0Z" fill="#308028" stroke="#041204" stroke-width="1.7" stroke-linejoin="round"/><path d="M1448.0 702.0L1475.6 705.8M1448.0 702.0L1467.3 721.0M1448.0 702.0L1465.0 723.2M1448.0 702.0L1461.4 727.2M1448.0 702.0L1447.2 730.0M1448.0 702.0L1446.9 730.7M1448.0 702.0L1444.8 730.3M1448.0 702.0L1438.3 728.6M1448.0 702.0L1435.8 726.6M1448.0 702.0L1430.6 722.8M1448.0 702.0L1427.3 722.0M1448.0 702.0L1423.0 717.7M1448.0 702.0L1420.9 710.5M1448.0 702.0L1419.0 706.6M1448.0 702.0L1418.8 706.0M1448.0 702.0L1420.5 704.1M1448.0 702.0L1423.3 686.4M1448.0 702.0L1426.9 684.1M1448.0 702.0L1454.1 674.1M1448.0 702.0L1457.2 676.4M1448.0 702.0L1467.9 683.2M1448.0 702.0L1474.4 689.1" stroke="#041204" stroke-width="1.7" fill="none"/><circle cx="1497" cy="701" r="14.8" fill="#7dc840" stroke="#55555f" stroke-width="1.100"/><circle cx="1533" cy="699" r="14.8" fill="#7dc840" stroke="#55555f" stroke-width="1.100"/><circle cx="1574" cy="707" r="14.8" fill="#7dc840" stroke="#55555f" stroke-width="1.100"/><circle cx="1554.5" cy="692" r="14.8" fill="#7dc840" stroke="#55555f" stroke-width="1.100"/><circle cx="1515" cy="683.5" r="14.8" fill="#7dc840" stroke="#55555f" stroke-width="1.100"/><circle cx="1306.5" cy="587.5" r="11.500" fill="#b9b9b9" stroke="#1a1a1a" stroke-width="1.400"/><path d="M1306.5 576.5V582.5M1306.5 598.5V592.5M1295.5 587.5H1301.5M1317.5 587.5H1311.5" stroke="#1a1a1a" stroke-width="1.500"/><circle cx="1306.5" cy="587.5" r="5.200" fill="#efefef"/><circle cx="1153.5" cy="759.5" r="11.500" fill="#b9b9b9" stroke="#1a1a1a" stroke-width="1.400"/><path d="M1153.5 748.5V754.5M1153.5 770.5V764.5M1142.5 759.5H1148.5M1164.5 759.5H1158.5" stroke="#1a1a1a" stroke-width="1.500"/><circle cx="1153.5" cy="759.5" r="5.200" fill="#efefef"/><circle cx="1486" cy="759.5" r="11.500" fill="#b9b9b9" stroke="#1a1a1a" stroke-width="1.400"/><path d="M1486 748.5V754.5M1486 770.5V764.5M1475 759.5H1481M1497 759.5H1491" stroke="#1a1a1a" stroke-width="1.500"/><circle cx="1486" cy="759.5" r="5.200" fill="#efefef"/><g transform="translate(1479.9 914.9) rotate(45)" stroke="#24241a" stroke-width="1" stroke-linejoin="round"><rect x="-17" y="-13" width="30" height="26" fill="#a9a574"/><path d="M-9 -13V13M-2 -13V13M5 -13V13" fill="none" stroke="#24241a" stroke-width="1"/><rect x="-19" y="-19" width="36" height="6.500" rx="1" fill="#a9a574"/><rect x="-19" y="12.500" width="36" height="6.500" rx="1" fill="#a9a574"/><rect x="12.500" y="-19" width="6.500" height="38" rx="1" fill="#a9a574"/></g><g transform="translate(1373.1 914.9) rotate(135)" stroke="#24241a" stroke-width="1" stroke-linejoin="round"><rect x="-17" y="-13" width="30" height="26" fill="#a9a574"/><path d="M-9 -13V13M-2 -13V13M5 -13V13" fill="none" stroke="#24241a" stroke-width="1"/><rect x="-19" y="-19" width="36" height="6.500" rx="1" fill="#a9a574"/><rect x="-19" y="12.500" width="36" height="6.500" rx="1" fill="#a9a574"/><rect x="12.500" y="-19" width="6.500" height="38" rx="1" fill="#a9a574"/></g><g transform="translate(1373.1 808.1) rotate(225)" stroke="#24241a" stroke-width="1" stroke-linejoin="round"><rect x="-17" y="-13" width="30" height="26" fill="#a9a574"/><path d="M-9 -13V13M-2 -13V13M5 -13V13" fill="none" stroke="#24241a" stroke-width="1"/><rect x="-19" y="-19" width="36" height="6.500" rx="1" fill="#a9a574"/><rect x="-19" y="12.500" width="36" height="6.500" rx="1" fill="#a9a574"/><rect x="12.500" y="-19" width="6.500" height="38" rx="1" fill="#a9a574"/></g><g transform="translate(1479.9 808.1) rotate(315)" stroke="#24241a" stroke-width="1" stroke-linejoin="round"><rect x="-17" y="-13" width="30" height="26" fill="#a9a574"/><path d="M-9 -13V13M-2 -13V13M5 -13V13" fill="none" stroke="#24241a" stroke-width="1"/><rect x="-19" y="-19" width="36" height="6.500" rx="1" fill="#a9a574"/><rect x="-19" y="12.500" width="36" height="6.500" rx="1" fill="#a9a574"/><rect x="12.500" y="-19" width="6.500" height="38" rx="1" fill="#a9a574"/></g><clipPath id="ctab"><circle cx="1426.5" cy="861.5" r="58"/></clipPath><circle cx="1426.5" cy="861.5" r="58" fill="#a8a473"/><path d="M1252.5 919.5L1368.5 803.5M1261.8 919.5L1377.8 803.5M1271.1 919.5L1387.1 803.5M1280.4 919.5L1396.4 803.5M1289.7 919.5L1405.7 803.5M1299.0 919.5L1415.0 803.5M1308.3 919.5L1424.3 803.5M1317.6 919.5L1433.6 803.5M1326.9 919.5L1442.9 803.5M1336.2 919.5L1452.2 803.5M1345.5 919.5L1461.5 803.5M1354.8 919.5L1470.8 803.5M1364.1 919.5L1480.1 803.5M1373.4 919.5L1489.4 803.5M1382.7 919.5L1498.7 803.5M1392.0 919.5L1508.0 803.5M1401.3 919.5L1517.3 803.5M1410.6 919.5L1526.6 803.5M1419.9 919.5L1535.9 803.5M1429.2 919.5L1545.2 803.5M1438.5 919.5L1554.5 803.5M1447.8 919.5L1563.8 803.5M1457.1 919.5L1573.1 803.5M1466.4 919.5L1582.4 803.5M1475.7 919.5L1591.7 803.5" stroke="#26261c" stroke-width="1.300" clip-path="url(#ctab)"/><circle cx="1426.5" cy="861.5" r="58" fill="none" stroke="#1a1a14" stroke-width="1.500"/><circle cx="1426.5" cy="861.5" r="3.800" fill="#6a6a6a" stroke="#333" stroke-width=".8"/><circle cx="1553.400" cy="862" r="31.800" fill="#b5b5b5" stroke="#2a2a2a" stroke-width="1.200"/><rect x="1549.500" y="850.500" width="7.500" height="22.500" fill="#707070" stroke="#2a2a2a" stroke-width="1"/><rect x="1185.500" y="968" width="126.500" height="12.500" fill="#fff"/><path d="M1096 967.500H1185.500V980H1108V1004H1096Z" fill="#000"/><rect x="1312" y="967.500" width="109.500" height="12.500" fill="#000"/><rect x="1421" y="968" width="75.500" height="11.500" fill="#fff" stroke="#000" stroke-width="1.200"/><path d="M1421 973.800H1496.500" stroke="#000" stroke-width="1.200"/><path d="M1496.500 967.500H1614V1004H1601.500V980H1496.500Z" fill="#000"/><path d="M1185.300 967.500V910.200A63.400 57 0 0 1 1248.700 967A63.200 57 0 0 1 1311.900 910.200V967.500" fill="none" stroke="#111" stroke-width="1.200"/><path d="M1104.500 272V975M1613.600 216V975M1054 323.500L1637 237" stroke="#222" stroke-width="1.100" stroke-dasharray="5 1.500 1.500 1.500" fill="none"/><rect x="1551.500" y="283" width="27" height="104" fill="#b0ab82" stroke="#1a1a14" stroke-width="1.200"/><rect x="1587.500" y="282" width="8.500" height="107" rx="1.500" fill="#b0ab82" stroke="#1a1a14" stroke-width="1.200"/><path d="M1579 309H1587.500V317H1579L1581 313ZM1579 349H1587.500V357H1579L1581 353Z" fill="#b0ab82" stroke="#1a1a14" stroke-width="1"/><path d="M1106 237.500H1180.500V387.500M1306.500 216V333M1665 262L1240 418.500M1240.0 418.5L1246.4 412.2M1240.0 418.5L1249.0 419.1M1665 262L1583 456M1583.0 456.0L1582.8 447.0M1583.0 456.0L1589.6 449.9M1084 534.500H1182.500V513M1066 579.500H1217.500V568M1060 668H1160.500V651M1643.500 480H1467V495.500M1642.500 561.500H1498V590M1642.500 603.500H1449.500V701M1642.500 654.500H1515.500V683M1076 802L1150 760.500M1150.0 760.5L1144.8 766.6M1150.0 760.5L1142.1 761.8M1076 802L1299 597M1299.0 597.0L1295.3 604.1M1299.0 597.0L1291.6 600.1M1076 802L1486 759.500M1486.0 759.5L1478.8 763.0M1486.0 759.5L1478.2 757.5M1214 828.500C1175 832 1152 846 1152 868C1152 884 1158 892 1164 895.500L1155 897.500M1262 825C1300 821 1322 808 1324 786C1325 770 1322 760 1316.500 754L1326 755" stroke="#111" stroke-width="1.250" fill="none"/><circle cx="1180.500" cy="393" r="5.200" fill="none" stroke="#222" stroke-width="1.100"/><circle cx="1182.5" cy="513" r="2.800" fill="#000"/><circle cx="1217.5" cy="567.5" r="2.800" fill="#000"/><circle cx="1467" cy="495.5" r="2.800" fill="#000"/><circle cx="1515.5" cy="683.5" r="2.800" fill="#000"/><text x="997" y="243.4" font-family="DejaVu Sans, Liberation Sans, sans-serif" font-size="14.8" fill="#000" textLength="109.0" lengthAdjust="spacingAndGlyphs">EX. MAGNOLIA</text><text x="1361" y="339.4" font-family="DejaVu Sans, Liberation Sans, sans-serif" font-size="14.8" fill="#000" textLength="122.0" lengthAdjust="spacingAndGlyphs">2 LOROPETALUM</text><text x="1666" y="266.4" font-family="DejaVu Sans, Liberation Sans, sans-serif" font-size="14.8" font-style="italic" fill="#000" textLength="143.0" lengthAdjust="spacingAndGlyphs">RAISED PLANT BED</text><text x="974" y="519.4" font-family="DejaVu Sans, Liberation Sans, sans-serif" font-size="14.8" fill="#000" textLength="110.0" lengthAdjust="spacingAndGlyphs">CRAPE MYRTLE</text><text x="977" y="574.4" font-family="DejaVu Sans, Liberation Sans, sans-serif" font-size="14.8" fill="#000" textLength="89.0" lengthAdjust="spacingAndGlyphs">5 INKBERRY</text><text x="937" y="656.4" font-family="DejaVu Sans, Liberation Sans, sans-serif" font-size="14.8" fill="#000" textLength="122.0" lengthAdjust="spacingAndGlyphs">3 LOROPETALUM</text><text x="1644" y="502.4" font-family="DejaVu Sans, Liberation Sans, sans-serif" font-size="14.8" fill="#000" textLength="67.0" lengthAdjust="spacingAndGlyphs">3 FATSIA</text><text x="1642" y="598.4" font-family="DejaVu Sans, Liberation Sans, sans-serif" font-size="14.8" fill="#000" textLength="128.0" lengthAdjust="spacingAndGlyphs">JAPANESE MAPLE</text><text x="1643" y="689.4" font-family="DejaVu Sans, Liberation Sans, sans-serif" font-size="14.8" fill="#000" textLength="89.0" lengthAdjust="spacingAndGlyphs">5 INKBERRY</text><text x="1643" y="709.4" font-family="DejaVu Sans, Liberation Sans, sans-serif" font-size="14.8" fill="#000" textLength="122.0" lengthAdjust="spacingAndGlyphs">2 LOROPETALUM</text><text x="960" y="809.4" font-family="DejaVu Sans, Liberation Sans, sans-serif" font-size="14.8" font-style="italic" fill="#000" textLength="115.0" lengthAdjust="spacingAndGlyphs">GROUND LIGHT</text><rect x="1213" y="819" width="50" height="17" fill="#ead8cf" opacity=".9"/><text x="1215" y="833.4" font-family="DejaVu Sans, Liberation Sans, sans-serif" font-size="14.8" font-style="italic" fill="#000" textLength="46.0" lengthAdjust="spacingAndGlyphs">PATIO</text><text x="1322" y="1031.2" font-family="DejaVu Sans, Liberation Sans, sans-serif" font-size="17" fill="#000" textLength="62.0" lengthAdjust="spacingAndGlyphs">HOUSE</text><rect x="1617.500" y="838.500" width="14" height="31" fill="#fff"/><g transform="translate(1630.300 867.700) rotate(-90)"><text x="0" y="0" font-family="Liberation Sans, sans-serif" font-size="15.600" fill="#000" stroke="#000" stroke-width=".25" textLength="27.700" lengthAdjust="spacingAndGlyphs">2.89</text></g><path d="M1625 828L1621.200 835.800H1628.800ZM1625 880.200L1621.200 872.500H1628.800Z" fill="#000"/><rect x="1100.0" y="730.5" width="9" height="9" fill="#000"/><rect x="1352.5" y="730.5" width="9" height="9" fill="#000"/><rect x="1605.9" y="730.5" width="9" height="9" fill="#000"/><rect x="1100.0" y="849.1" width="9" height="9" fill="#000"/><rect x="1605.9" y="849.1" width="9" height="9" fill="#000"/><rect x="1100.0" y="968.5" width="9" height="9" fill="#000" stroke="#777" stroke-width="1"/><rect x="1352.5" y="968.5" width="9" height="9" fill="#000" stroke="#777" stroke-width="1"/><rect x="1605.9" y="968.5" width="9" height="9" fill="#000" stroke="#777" stroke-width="1"/><circle cx="1597.700" cy="854.900" r="4.500" fill="none" stroke="#111" stroke-width="1.500"/></g></svg>
<div id="nav"></div><div id="navtop"></div><svg class="i" style="left:31.6px;top:15.0px" width="25" height="25" viewBox="0 0 25 25" >
<polygon points="10.6,0.2 0,9.5 6.6,14 11.7,10 11.7,0.2" fill="#6ba6e7"/><polygon points="13.5,0.2 24.5,9.5 17.8,14 12.9,10" fill="#6ba6e7"/>
<polygon points="0,11 0,17 11.3,24.7 11.3,17 6.6,15.2" fill="#3f82d2"/><polygon points="24.5,11 24.5,17 13.5,24.7 13.5,17 17.8,15.2" fill="#3f82d2"/>
<polygon points="0,11 6.6,15.2 3,13 0,13" fill="#2f5fa8"/>
</svg><span class="t" style="left:63.8px;top:16.45px;font-size:21.3px;color:#fff;font-weight:bold;letter-spacing:-0.25px;">smart</span><span class="t" style="left:122.0px;top:15.60px;font-size:22px;color:#fff;letter-spacing:0.07px;">draw</span><div id="huis"></div><span class="t" style="left:224.0px;top:19.72px;font-size:15.3px;color:#fff;letter-spacing:0.22px;-webkit-text-stroke:0.35px #fff;">het dossier</span><span class="t" style="left:323.0px;top:19.72px;font-size:15.3px;color:#fff;letter-spacing:-0.2px;-webkit-text-stroke:0.35px #fff;">Huis</span><span class="t" style="left:375.5px;top:19.72px;font-size:15.3px;color:#fff;letter-spacing:0.11px;-webkit-text-stroke:0.35px #fff;">Ontwerp</span><span class="t" style="left:457.0px;top:19.72px;font-size:15.3px;color:#fff;letter-spacing:-0.14px;-webkit-text-stroke:0.35px #fff;">Invoegen</span><span class="t" style="left:542.0px;top:19.72px;font-size:15.3px;color:#fff;letter-spacing:0.12px;-webkit-text-stroke:0.35px #fff;">Bladzijde</span><span class="t" style="left:627.5px;top:19.72px;font-size:15.3px;color:#fff;letter-spacing:0.05px;-webkit-text-stroke:0.35px #fff;">Tafel</span><span class="t" style="left:682.0px;top:19.72px;font-size:15.3px;color:#fff;letter-spacing:0.16px;-webkit-text-stroke:0.35px #fff;">Opties</span><span class="t" style="left:749.0px;top:19.72px;font-size:15.3px;color:#fff;letter-spacing:0.23px;-webkit-text-stroke:0.35px #fff;">Ontwikkelaar</span><span class="t" style="left:862.0px;top:19.72px;font-size:15.3px;color:#fff;letter-spacing:0.22px;-webkit-text-stroke:0.35px #fff;">Ondersteuning</span><div id="kopen"></div><span class="t" style="left:1021.2px;top:20.32px;font-size:15.3px;color:#1a1a1a;letter-spacing:-0.51px;-webkit-text-stroke:0.3px #1a1a1a;">Kopen</span><div id="tb"></div><div id="tbline"></div><div id="tbline2"></div><svg class="i" style="left:54.0px;top:73.5px" width="18" height="17" viewBox="0 0 18 17" ><path d="M6.5 1h5v6h3.4L9 13 3.1 7h3.4z" fill="#1c1c1c"/><rect x="0.5" y="12.2" width="17" height="4.3" rx="1" fill="#1c1c1c"/><path d="M3.1 12.2 9 12.2" stroke="#f6f6f6" stroke-width="0"/><circle cx="12.6" cy="14.6" r=".7" fill="#eee"/><circle cx="15" cy="14.6" r=".7" fill="#eee"/><path d="M5.2 12.2 9 16 12.8 12.2z" fill="#f7f7f7" opacity="0"/></svg><span class="t" style="left:31.0px;top:95.89px;font-size:12.8px;color:#1c1c1c;letter-spacing:0.15px;-webkit-text-stroke:0.42px #1c1c1c;">Exporteren</span><svg class="i" style="left:120.5px;top:67.7px" width="14" height="13" viewBox="0 0 14 13" ><path d="M7.5 2.2H3.2A2 2 0 0 0 1.2 4.2v5.6a2 2 0 0 0 2 2h6.2a2 2 0 0 0 2-2V8.4" fill="none" stroke="#1c1c1c" stroke-width="1.5"/><path d="M9.3 0.3 13.6 3.7 9.3 7.1V5c-2.6 0-4 .9-4.9 2.6C4.5 4.6 6.1 2.6 9.3 2.4z" fill="#1c1c1c"/></svg><span class="t" style="left:137.5px;top:68.89px;font-size:12.8px;color:#1c1c1c;letter-spacing:-0.11px;-webkit-text-stroke:0.42px #1c1c1c;">Delen</span><svg class="i" style="left:120.8px;top:95.3px" width="14" height="13" viewBox="0 0 14 13" ><path d="M3.4 5V1h5.8l1.6 1.6V5" fill="#f8f8f8" stroke="#1c1c1c" stroke-width="1.3"/><rect x="0.3" y="5" width="13.4" height="5.4" rx="1.2" fill="#1c1c1c"/><rect x="3.4" y="8.2" width="7.4" height="4" fill="#f8f8f8" stroke="#1c1c1c" stroke-width="1.3"/></svg><span class="t" style="left:137.0px;top:96.39px;font-size:12.8px;color:#1c1c1c;letter-spacing:0.17px;-webkit-text-stroke:0.42px #1c1c1c;">Afdrukken</span><div class="sep" style="left:220.0px;top:53px;height:75px"></div><svg class="i" style="left:256.1px;top:74.0px" width="17" height="18" viewBox="0 0 17 18" ><path d="M1 2.2h10.4v3.2H7.2v11H1z" fill="#1c1c1c" stroke="#1c1c1c" stroke-width="1" stroke-linejoin="round"/><rect x="3.5" y="0.6" width="5.6" height="2.4" rx=".6" fill="#1c1c1c"/><path d="M7.4 5.6h5l3.4 3.4v8.2H7.4z" fill="#fafafa" stroke="#1c1c1c" stroke-width="1.4" stroke-linejoin="round"/><path d="M12.2 5.8v3.4h3.4" fill="none" stroke="#1c1c1c" stroke-width="1.2"/></svg><span class="t" style="left:242.0px;top:95.89px;font-size:12.8px;color:#1c1c1c;letter-spacing:-0.09px;-webkit-text-stroke:0.42px #1c1c1c;">Plakken</span><svg class="i" style="left:333.0px;top:74.0px" width="18" height="18" viewBox="0 0 18 18" ><path d="M5 1h5l3 3v8.5H1.2V4.6z" fill="none" stroke="#1c1c1c" stroke-width="1.4" stroke-linejoin="round"/><path d="M5 1.2v3.6H1.4" fill="none" stroke="#1c1c1c" stroke-width="1.2"/><path d="M10.6 4.6h5.8v12.4H7.6v-8.6z" fill="#fafafa" stroke="#1c1c1c" stroke-width="1.4" stroke-linejoin="round"/><path d="M10.6 4.8v3.8H7.8" fill="none" stroke="#1c1c1c" stroke-width="1.2"/></svg><span class="t" style="left:316.0px;top:95.89px;font-size:12.8px;color:#1c1c1c;letter-spacing:0.2px;-webkit-text-stroke:0.42px #1c1c1c;">Kopiëren</span><svg class="i" style="left:421.0px;top:75.5px" width="19" height="15" viewBox="0 0 19 15" ><circle cx="3.6" cy="3.4" r="2.5" fill="none" stroke="#1c1c1c" stroke-width="1.6"/><circle cx="3.6" cy="11.6" r="2.5" fill="none" stroke="#1c1c1c" stroke-width="1.6"/><path d="M5.6 4.8 18 12.4M5.6 10.2 18 2.6" stroke="#1c1c1c" stroke-width="1.3" fill="none"/><path d="M8.5 7.5 18 1.8 18.5 3.2 10 8.2zM8.5 7.5 18 13.2 18.5 11.8 10 6.8z" fill="#fff" stroke="#1c1c1c" stroke-width=".9" stroke-linejoin="round"/></svg><span class="t" style="left:397.6px;top:95.89px;font-size:12.8px;color:#1c1c1c;letter-spacing:0.2px;-webkit-text-stroke:0.42px #1c1c1c;">Besnoeiing</span><svg class="i" style="left:529.0px;top:74.0px" width="18" height="16" viewBox="0 0 18 16" ><g transform="rotate(28 9 8)"><path d="M7.6 0.2c.9-.5 2-.5 2.8 0v3.4h2.8c.8 0 1.3.6 1.3 1.3V7.4H3.5V4.9c0-.7.5-1.3 1.3-1.3h2.8z" fill="#1c1c1c"/><path d="M3.6 8.6h10.8l.8 6.2H5.2c-1.2 0-1.9-.6-1.8-1.8z" fill="#fafafa" stroke="#1c1c1c" stroke-width="1.3" stroke-linejoin="round"/></g></svg><span class="t" style="left:491.0px;top:95.89px;font-size:12.8px;color:#1c1c1c;letter-spacing:0.2px;-webkit-text-stroke:0.42px #1c1c1c;">Formaat Painter</span><div class="sep" style="left:612.0px;top:53px;height:75px"></div><svg class="i" style="left:635.5px;top:68.2px" width="14" height="12" viewBox="0 0 14 12" ><path d="M5.6 0.4 0.4 4.6 5.6 8.8V6.2c3.6 0 5.6 1 6.6 4.6C13 6 10.6 3 5.6 2.9z" fill="#a3a3a3"/></svg><span class="t" style="left:653.0px;top:68.89px;font-size:12.8px;color:#a3a3a3;letter-spacing:0.05px;-webkit-text-stroke:0.42px #a3a3a3;">Ongedaan maken</span><svg class="i" style="left:635.5px;top:95.6px" width="14" height="12" viewBox="0 0 14 12" ><path d="M8.4 0.4 13.6 4.6 8.4 8.8V6.2c-3.6 0-5.6 1-6.6 4.6C1 6 3.4 3 8.4 2.9z" fill="#1c1c1c"/></svg><span class="t" style="left:653.0px;top:96.39px;font-size:12.8px;color:#1c1c1c;letter-spacing:0.22px;-webkit-text-stroke:0.42px #1c1c1c;">Opnieuw doen</span><div class="sep" style="left:779.5px;top:53px;height:75px"></div><div id="sel"></div><svg class="i" style="left:829.0px;top:74.0px" width="14" height="18" viewBox="0 0 14 18" ><path d="M1.2 0.8 12.8 11.4H7.9l2.9 5.5-2.3 1.1-2.8-5.7L1.2 15.6z" fill="#111"/></svg><span class="t" style="left:808.0px;top:95.89px;font-size:12.8px;color:#1c1c1c;letter-spacing:0.12px;-webkit-text-stroke:0.42px #1c1c1c;">Selecteer</span><svg class="i" style="left:883.2px;top:99.5px" width="9" height="5" viewBox="0 0 9 5" ><path d="M0 0h9L4.5 5z" fill="#1c1c1c"/></svg><svg class="i" style="left:922.5px;top:75.5px" width="15" height="15" viewBox="0 0 15 15" ><rect x="1" y="1.6" width="13" height="12" rx="2.6" fill="#fdfdfd" stroke="#1c1c1c" stroke-width="1.4"/></svg><span class="t" style="left:915.0px;top:95.89px;font-size:12.8px;color:#1c1c1c;letter-spacing:0.38px;-webkit-text-stroke:0.42px #1c1c1c;">Vorm</span><svg class="i" style="left:968.3px;top:99.5px" width="9" height="5" viewBox="0 0 9 5" ><path d="M0 0h9L4.5 5z" fill="#1c1c1c"/></svg><svg class="i" style="left:1001.5px;top:74.5px" width="16" height="17" viewBox="0 0 16 17" ><path d="M2 9.2 9.6 1.6l2.6 2.6-7.6 7.6-3.2.6z" fill="#fafafa" stroke="#1c1c1c" stroke-width="1.2" stroke-linejoin="round"/><path d="M8 3.2 10.6.6l2.6 2.6-2.6 2.6z" fill="#1c1c1c"/><path d="M3.4 11.6H9v4.2h6.4" fill="none" stroke="#1c1c1c" stroke-width="1.3"/></svg><span class="t" style="left:1000.0px;top:95.89px;font-size:12.8px;color:#1c1c1c;letter-spacing:0.03px;-webkit-text-stroke:0.42px #1c1c1c;">Lijn</span><svg class="i" style="left:1041.1px;top:99.5px" width="9" height="5" viewBox="0 0 9 5" ><path d="M0 0h9L4.5 5z" fill="#1c1c1c"/></svg><span class="t" style="left:1079.2px;top:71.82px;font-size:23.5px;color:#1c1c1c;letter-spacing:-0.09px;">A</span><span class="t" style="left:1072.0px;top:95.89px;font-size:12.8px;color:#1c1c1c;letter-spacing:0.03px;-webkit-text-stroke:0.42px #1c1c1c;">Tekst</span><div class="sep" style="left:1127.8px;top:53px;height:75px"></div><svg class="i" style="left:1163.0px;top:74.5px" width="18" height="17" viewBox="0 0 18 17" ><path d="M9 3.4H3.8A2.4 2.4 0 0 0 1.4 5.8v7.6a2.4 2.4 0 0 0 2.4 2.4h7.6a2.4 2.4 0 0 0 2.4-2.4v-2" fill="none" stroke="#a3a3a3" stroke-width="1.3"/><path d="M13.4.6c1.6 2.4 3.4 4.2 3.4 6.2a3.4 3.4 0 0 1-6.8 0c0-2 1.8-3.800 3.4-6.200z" fill="#a3a3a3"/><path d="M12.2 6.400c0 1 .4 1.700 1.300 2" stroke="#f4f4f4" stroke-width=".8" fill="none"/></svg><span class="t" style="left:1153.0px;top:95.89px;font-size:12.8px;color:#a3a3a3;letter-spacing:0.52px;-webkit-text-stroke:0.42px #a3a3a3;">Stijlen</span><div class="sep" style="left:1209.7px;top:61px;height:61px"></div><svg class="i" style="left:1241.5px;top:74.5px" width="17" height="17" viewBox="0 0 17 17" ><rect x="1" y="1" width="15" height="15" rx="2.4" fill="none" stroke="#a3a3a3" stroke-width="1.3"/><path d="M4 5.200h3.600M9.400 5.200h3.600M4 8.500h3.600M9.400 8.500h3.600M4 11.800h3.600M9.400 11.800h3.600M8.500 3.200v10.600" stroke="#a3a3a3" stroke-width="1.500" fill="none"/></svg><span class="t" style="left:1224.0px;top:95.89px;font-size:12.8px;color:#a3a3a3;letter-spacing:0.05px;-webkit-text-stroke:0.42px #a3a3a3;">Thema&#x27;s</span><svg class="i" style="left:1315.5px;top:74.0px" width="18" height="18" viewBox="0 0 18 18" ><path d="M10.200 4 16.400 10.200 10.400 16.600 4.200 10.400z" fill="#1c1c1c"/><path d="M7.800 6.600C6.800 3.400 9.400 1 12.600 2.200" stroke="#1c1c1c" stroke-width="1.500" fill="none" stroke-linecap="round"/><path d="M1.200 7.400 9.400 7 5.600 10.800 4.400 8.600z" fill="#1c1c1c"/><path d="M5.200 9.600 10.200 4.800" stroke="#f6f6f6" stroke-width=".9"/></svg><span class="t" style="left:1305.0px;top:95.89px;font-size:12.8px;color:#1c1c1c;letter-spacing:0.3px;-webkit-text-stroke:0.42px #1c1c1c;">Vullen</span><svg class="i" style="left:1376.5px;top:74.5px" width="18" height="17" viewBox="0 0 18 17" ><path d="M9.500 3.200H3.800A2.400 2.400 0 0 0 1.400 5.600v7.800a2.400 2.400 0 0 0 2.400 2.400h7.800A2.400 2.400 0 0 0 14 13.400v-3" fill="none" stroke="#1c1c1c" stroke-width="1.400"/><path d="M6.400 8.800 13.400 1.800l2.600 2.600-7 7-3.200.6z" fill="#fafafa" stroke="#1c1c1c" stroke-width="1.200" stroke-linejoin="round"/><path d="M12 3.200 14.600 5.800" stroke="#1c1c1c" stroke-width="1.100"/></svg><span class="t" style="left:1374.0px;top:95.89px;font-size:12.8px;color:#1c1c1c;letter-spacing:0.19px;-webkit-text-stroke:0.42px #1c1c1c;">Lijn</span><svg class="i" style="left:1444.1px;top:74.5px" width="17" height="16" viewBox="0 0 17 16" ><path d="M8.500 0.300 11 5.600l5.800.7-4.300 4 1.100 5.700L8.500 13.200 3.400 16l1.100-5.700L.2 6.300 6 5.600z" fill="#1c1c1c"/></svg><span class="t" style="left:1427.0px;top:95.89px;font-size:12.8px;color:#1c1c1c;letter-spacing:0.04px;-webkit-text-stroke:0.42px #1c1c1c;">Effecten</span><div class="sep" style="left:1505.8px;top:53px;height:75px"></div><div id="fontbox"></div><div id="sizebox"></div><span class="t" style="left:1538.7px;top:72.29px;font-size:12.8px;color:#1c1c1c;letter-spacing:-0.06px;-webkit-text-stroke:0.2px #1c1c1c;">Verdana</span><span class="t" style="left:1701.0px;top:72.40px;font-size:12.6px;color:#1c1c1c;letter-spacing:-1.2px;-webkit-text-stroke:0.15px #1c1c1c;">12</span><svg class="i" style="left:1725.5px;top:75.0px" width="9" height="5" viewBox="0 0 9 5" ><path d="M0 0h9L4.5 5z" fill="#1c1c1c"/></svg><span class="t" style="left:1535.5px;top:100.35px;font-size:17.5px;color:#1c1c1c;font-weight:bold;letter-spacing:-1.14px;">B</span><span class="t" style="left:1565.0px;top:100.35px;font-size:17.5px;color:#1c1c1c;font-weight:bold;font-style:italic;letter-spacing:2.0px;transform:skewX(-8deg);">I</span><span class="t" style="left:1593.0px;top:99.17px;font-size:15px;color:#1c1c1c;letter-spacing:-0.34px;-webkit-text-stroke:0.45px #1c1c1c;">U</span><div style="position:absolute;left:1592px;top:112.800px;width:12.500px;height:1.200px;background:#1c1c1c"></div><span class="t" style="left:1623.5px;top:100.76px;font-size:12.5px;color:#9c9c9c;letter-spacing:-0.25px;-webkit-text-stroke:0.4px #9c9c9c;">x</span><span class="t" style="left:1630.0px;top:106.40px;font-size:8px;color:#9c9c9c;letter-spacing:0.55px;-webkit-text-stroke:0.3px #9c9c9c;">2</span><span class="t" style="left:1654.5px;top:101.56px;font-size:12.5px;color:#9c9c9c;letter-spacing:-0.25px;-webkit-text-stroke:0.4px #9c9c9c;">x</span><span class="t" style="left:1661.0px;top:100.20px;font-size:8px;color:#9c9c9c;letter-spacing:0.55px;-webkit-text-stroke:0.3px #9c9c9c;">2</span><span class="t" style="left:1686.0px;top:98.83px;font-size:15.5px;color:#1c1c1c;letter-spacing:1.16px;-webkit-text-stroke:0.45px #1c1c1c;">A</span><div style="position:absolute;left:1685.500px;top:112px;width:12.500px;height:2px;background:#1c1c1c"></div><span class="t" style="left:1717.0px;top:99.31px;font-size:18px;color:#a3a3a3;letter-spacing:0.53px;">Ω</span><div class="sep" style="left:1758.5px;top:53px;height:75px"></div><svg class="i" style="left:1784.5px;top:69.5px" width="13" height="10" viewBox="0 0 13 10" ><path d="M3.600 1.200H13M3.600 5H13M3.600 8.800H13" stroke="#a3a3a3" stroke-width="1.600"/><circle cx="1" cy="1.200" r="1" fill="#a3a3a3"/><circle cx="1" cy="5" r="1" fill="#a3a3a3"/><circle cx="1" cy="8.800" r="1" fill="#a3a3a3"/></svg><span class="t" style="left:1801.0px;top:68.89px;font-size:12.8px;color:#a3a3a3;letter-spacing:-0.18px;-webkit-text-stroke:0.42px #a3a3a3;">Kogel</span><svg class="i" style="left:1784.5px;top:96.5px" width="13" height="11" viewBox="0 0 13 11" ><path d="M5 1.200H13M5 5.500H13M5 9.800H13" stroke="#a3a3a3" stroke-width="1.600"/><path d="M1.800 1v9M.2 2.800 1.800 1l1.600 1.800M.2 8.200 1.800 10l1.600-1.800" stroke="#a3a3a3" stroke-width="1" fill="none"/></svg><span class="t" style="left:1801.0px;top:96.39px;font-size:12.8px;color:#a3a3a3;letter-spacing:0.31px;-webkit-text-stroke:0.42px #a3a3a3;">Spatiëring</span><svg class="i" style="left:1885.0px;top:68.0px" width="13" height="13" viewBox="0 0 13 13" ><rect x=".8" y=".8" width="11.400" height="11.400" rx="1.600" fill="none" stroke="#1c1c1c" stroke-width="1.400"/><path d="M3.200 4.200h4M3.200 6.500h6.400M3.200 8.800h4" stroke="#1c1c1c" stroke-width="1.300"/></svg><span class="t" style="left:1902.0px;top:68.89px;font-size:12.8px;color:#1c1c1c;letter-spacing:0.43px;-webkit-text-stroke:0.42px #1c1c1c;">Uitlijnen</span><svg class="i" style="left:1885.0px;top:98.0px" width="13" height="8" viewBox="0 0 13 8" ><path d="M2.500 4H10.500" stroke="#a3a3a3" stroke-width="1.500"/><path d="M0 4 3.400 1v6zM13 4 9.600 1v6z" fill="#a3a3a3"/></svg><span class="t" style="left:1901.0px;top:96.39px;font-size:12.8px;color:#a3a3a3;letter-spacing:0.32px;-webkit-text-stroke:0.42px #a3a3a3;">Tekstrichting</span><div id="left"></div><div id="leftline"></div><div class="hdr" style="left:16.500px;top:196px;width:189.500px;height:28px"></div><div id="meer"></div><span class="t" style="left:29.7px;top:204.09px;font-size:12.8px;color:#222;letter-spacing:0.12px;-webkit-text-stroke:0.2px #222;">Deuren en ramen</span><span class="t" style="left:215.6px;top:204.09px;font-size:12.8px;color:#fff;letter-spacing:0.08px;-webkit-text-stroke:0.2px #fff;">Meer</span><svg class="i" style="left:272.9px;top:208.0px" width="9" height="5" viewBox="0 0 9 5" ><path d="M0 0h9L4.500 5z" fill="#fff"/></svg><div id="symbox"></div><div id="symsel"></div><div id="scrolltrack"></div><div id="scrollthumb"></div><svg class="i" style="left:0;top:0" width="313" height="480" viewBox="0 0 313 480"><path d="M33.300 279.500A48.700 38.200 0 0 1 82 241.300V279.500" fill="none" stroke="#3c3c3c" stroke-width="1.350"/><rect x="32.900" y="279.700" width="49.500" height="11" fill="#fff"/><path d="M115 279V241.500A49.500 37.500 0 0 1 164.500 279" fill="none" stroke="#3c3c3c" stroke-width="1.350"/><path d="M196.800 252.800V289.200A49.500 36.400 0 0 0 246.300 252.800" fill="none" stroke="#3c3c3c" stroke-width="1.350"/><path d="M82 340V377.200A49 37.200 0 0 1 33 340" fill="none" stroke="#3c3c3c" stroke-width="1.350"/><path d="M196.300 351.800H201V357H196.300M247 351.800H242.800V357H247" fill="none" stroke="#444" stroke-width="1.100"/><rect x="32.900" y="415" width="51" height="51" fill="#000"/><path d="M115 433V455A25.300 22 0 0 0 140.300 433A25.200 22 0 0 0 165.500 455V433" fill="none" stroke="#3c3c3c" stroke-width="1.350"/><path d="M197 449V427A25 22 0 0 1 222 449A25 22 0 0 1 247 427V449" fill="none" stroke="#3c3c3c" stroke-width="1.350"/></svg><span class="t" style="left:31.7px;top:299.99px;font-size:11.6px;color:#1c1c1c;letter-spacing:0.17px;-webkit-text-stroke:0.4px #1c1c1c;">Deur (28 &quot;)</span><span class="t" style="left:113.5px;top:299.99px;font-size:11.6px;color:#1c1c1c;letter-spacing:0.17px;-webkit-text-stroke:0.4px #1c1c1c;">Deur (28 &quot;)</span><span class="t" style="left:195.2px;top:299.99px;font-size:11.6px;color:#1c1c1c;letter-spacing:0.17px;-webkit-text-stroke:0.4px #1c1c1c;">Deur (28 &quot;)</span><span class="t" style="left:31.5px;top:387.19px;font-size:11.6px;color:#1c1c1c;letter-spacing:0.17px;-webkit-text-stroke:0.4px #1c1c1c;">Deur (28 &quot;)</span><span class="t" style="left:106.2px;top:387.19px;font-size:11.6px;color:#1c1c1c;letter-spacing:0.47px;-webkit-text-stroke:0.4px #1c1c1c;">Muuropening</span><span class="t" style="left:189.7px;top:387.19px;font-size:11.6px;color:#1c1c1c;letter-spacing:0.31px;-webkit-text-stroke:0.4px #1c1c1c;">Muuropeni...</span><svg class="i" style="left:28.5px;top:489.0px" width="18" height="16" viewBox="0 0 18 16" ><path d="M9 2.800H3.600A2.200 2.200 0 0 0 1.400 5v7.400a2.200 2.200 0 0 0 2.200 2.200H11a2.200 2.200 0 0 0 2.200-2.200V9.800" fill="none" stroke="#1c1c1c" stroke-width="1.400"/><path d="M6.200 8.200 13 1.400l2.400 2.400-6.800 6.800-3 .6z" fill="#f2f2f2" stroke="#1c1c1c" stroke-width="1.100" stroke-linejoin="round"/><path d="M7.500 7.500 12.500 2.500" stroke="#1c1c1c" stroke-width="2.200"/></svg><span class="t" style="left:62.4px;top:491.90px;font-size:12.8px;color:#1c1c1c;letter-spacing:0.12px;-webkit-text-stroke:0.3px #1c1c1c;">Enkele muur toevoegen</span><div class="hdr" style="left:16.500px;top:537.2px;width:275.500px;height:28px"></div><span class="t" style="left:29.8px;top:545.50px;font-size:12.8px;color:#222;letter-spacing:0.37px;-webkit-text-stroke:0.25px #222;">Documentopstelling</span><svg class="i" style="left:29.0px;top:575.0px" width="18" height="18" viewBox="0 0 18 18" ><path d="M1 17V1h16" fill="none" stroke="#c8c8c8" stroke-width="1.600"/><path d="M1 1h16v3H4v13H1z" fill="#e4e4e4" stroke="#bdbdbd" stroke-width=".6"/><path d="M5 1v2M8 1v2M11 1v2M14 1v2M1 6h2M1 9h2M1 12h2M1 15h2" stroke="#888" stroke-width=".6"/></svg><span class="t" style="left:62.4px;top:577.90px;font-size:12.8px;color:#1c1c1c;letter-spacing:0.06px;-webkit-text-stroke:0.3px #1c1c1c;">Eenheden en schaal</span><svg class="i" style="left:264.5px;top:579.0px" width="9" height="5" viewBox="0 0 9 5" ><path d="M0 0h9L4.500 5z" fill="#1c1c1c"/></svg><svg class="i" style="left:28.5px;top:610.0px" width="18" height="18" viewBox="0 0 18 18" ><path d="M5.600 4.400V2.200A1.200 1.200 0 0 1 6.800 1h5.400l3.400 3.400v7.400a1.200 1.200 0 0 1-1.200 1.200H11" fill="none" stroke="#1c1c1c" stroke-width="1.400" stroke-linejoin="round"/><path d="M12 1.200v3.400h3.400" fill="none" stroke="#1c1c1c" stroke-width="1.100"/><path d="M1 6.600a1.200 1.200 0 0 1 1.200-1.200h5.200l3.400 3.400v6.800a1.200 1.200 0 0 1-1.200 1.200H2.200A1.200 1.200 0 0 1 1 15.600z" fill="#f2f2f2" stroke="#1c1c1c" stroke-width="1.400" stroke-linejoin="round"/><path d="M7.200 5.600V9h3.400" fill="none" stroke="#1c1c1c" stroke-width="1.100"/></svg><span class="t" style="left:62.4px;top:614.00px;font-size:12.8px;color:#1c1c1c;letter-spacing:0.24px;-webkit-text-stroke:0.3px #1c1c1c;">Voeg annotatielaag toe</span><svg class="i" style="left:28.5px;top:646.0px" width="18" height="18" viewBox="0 0 18 18" ><path d="M5.600 4.400V2.200A1.200 1.200 0 0 1 6.800 1h5.400l3.400 3.400v7.400a1.200 1.200 0 0 1-1.200 1.200H11" fill="#1c1c1c" stroke="#1c1c1c" stroke-width="1.400" stroke-linejoin="round"/><path d="M12 1.200v3.400h3.400" fill="none" stroke="#1c1c1c" stroke-width="1.100"/><path d="M1 6.600a1.200 1.200 0 0 1 1.200-1.200h5.200l3.400 3.400v6.800a1.200 1.200 0 0 1-1.200 1.200H2.200A1.200 1.200 0 0 1 1 15.600z" fill="#f2f2f2" stroke="#1c1c1c" stroke-width="1.400" stroke-linejoin="round"/><path d="M7.200 5.600V9h3.400" fill="none" stroke="#1c1c1c" stroke-width="1.100"/></svg><span class="t" style="left:62.4px;top:649.90px;font-size:12.8px;color:#1c1c1c;letter-spacing:0.33px;-webkit-text-stroke:0.3px #1c1c1c;">Verwijder de annotatielaag</span><div class="hdr" style="left:16.500px;top:695.2px;width:275.500px;height:28px"></div><span class="t" style="left:29.8px;top:703.50px;font-size:12.8px;color:#222;letter-spacing:-0.13px;-webkit-text-stroke:0.25px #222;">Aanpassen</span><svg class="i" style="left:32.5px;top:732.0px" width="12" height="18" viewBox="0 0 12 18" ><path d="M2.500 1.500v15" stroke="#1c1c1c" stroke-width="1.300"/><circle cx="2.500" cy="1.800" r="1.300" fill="#1c1c1c"/><circle cx="2.500" cy="16.200" r="1.300" fill="#1c1c1c"/><path d="M4.500 9h7M8 5.500v7" stroke="#1c1c1c" stroke-width="1.600"/></svg><span class="t" style="left:62.4px;top:735.70px;font-size:12.8px;color:#1c1c1c;letter-spacing:0.08px;-webkit-text-stroke:0.3px #1c1c1c;">Hoek toevoegen</span><svg class="i" style="left:29.6px;top:767.8px" width="16" height="18" viewBox="0 0 16 18" ><path d="M5.400 .9H.9V17.100H15.100V.9H10.600" fill="none" stroke="#1c1c1c" stroke-width="1.600" stroke-linejoin="round"/><path d="M8 10.500V5" stroke="#1c1c1c" stroke-width="1.400"/><path d="M5.500 7.300 8 4.500 10.500 7.300" fill="none" stroke="#1c1c1c" stroke-width="1.400"/></svg><span class="t" style="left:62.4px;top:771.60px;font-size:12.8px;color:#1c1c1c;letter-spacing:0.2px;-webkit-text-stroke:0.3px #1c1c1c;">Muuropening toevoegen</span><svg class="i" style="left:28.5px;top:804.3px" width="18" height="16" viewBox="0 0 18 16" ><path d="M15.500 1.300L1.300 7.800V14.200H16.100V7" fill="none" stroke="#1c1c1c" stroke-width="1.900" stroke-linejoin="miter"/></svg><span class="t" style="left:62.4px;top:807.60px;font-size:12.8px;color:#1c1c1c;letter-spacing:0.21px;-webkit-text-stroke:0.3px #1c1c1c;">Gespleten muur</span><div class="hdr" style="left:16.500px;top:853.2px;width:275.500px;height:28px"></div><span class="t" style="left:29.8px;top:861.50px;font-size:12.8px;color:#222;letter-spacing:0.29px;-webkit-text-stroke:0.25px #222;">Afmetingen en oppervlakte</span><svg class="i" style="left:28.5px;top:891.0px" width="20" height="18" viewBox="0 0 20 18" ><rect x="5.49" y="3.43" width="2.02" height="12.14" fill="#1c1c1c" transform="rotate(0 6.5 9.5)"/><rect x="5.49" y="3.43" width="2.02" height="12.14" fill="#1c1c1c" transform="rotate(45 6.5 9.5)"/><rect x="5.49" y="3.43" width="2.02" height="12.14" fill="#1c1c1c" transform="rotate(90 6.5 9.5)"/><rect x="5.49" y="3.43" width="2.02" height="12.14" fill="#1c1c1c" transform="rotate(135 6.5 9.5)"/><circle cx="6.5" cy="9.5" r="4.6" fill="#1c1c1c"/><circle cx="6.5" cy="9.5" r="2.2" fill="#f2f2f2"/><rect x="14.95" y="0.70" width="1.10" height="6.60" fill="#1c1c1c" transform="rotate(0 15.5 4)"/><rect x="14.95" y="0.70" width="1.10" height="6.60" fill="#1c1c1c" transform="rotate(45 15.5 4)"/><rect x="14.95" y="0.70" width="1.10" height="6.60" fill="#1c1c1c" transform="rotate(90 15.5 4)"/><rect x="14.95" y="0.70" width="1.10" height="6.60" fill="#1c1c1c" transform="rotate(135 15.5 4)"/><circle cx="15.5" cy="4" r="2.5" fill="#1c1c1c"/><circle cx="15.5" cy="4" r="1.1" fill="#f2f2f2"/><rect x="14.95" y="11.20" width="1.10" height="6.60" fill="#1c1c1c" transform="rotate(0 15.5 14.5)"/><rect x="14.95" y="11.20" width="1.10" height="6.60" fill="#1c1c1c" transform="rotate(45 15.5 14.5)"/><rect x="14.95" y="11.20" width="1.10" height="6.60" fill="#1c1c1c" transform="rotate(90 15.5 14.5)"/><rect x="14.95" y="11.20" width="1.10" height="6.60" fill="#1c1c1c" transform="rotate(135 15.5 14.5)"/><circle cx="15.5" cy="14.5" r="2.5" fill="#1c1c1c"/><circle cx="15.5" cy="14.5" r="1.1" fill="#f2f2f2"/></svg><span class="t" style="left:67.0px;top:893.80px;font-size:12.8px;color:#1c1c1c;letter-spacing:0.26px;-webkit-text-stroke:0.3px #1c1c1c;">Toon afmetingen</span><div id="chk"></div><svg class="i" style="left:258.1px;top:896.8px" width="11" height="9" viewBox="0 0 11 9" ><path d="M1.200 4.600 4.200 7.400 9.800 1.400" fill="none" stroke="#fff" stroke-width="1.900"/></svg><svg class="i" style="left:28.5px;top:929.0px" width="18" height="12" viewBox="0 0 18 12" ><path d="M.5 1.200h17" stroke="#1c1c1c" stroke-width="2"/><path d="M1 5v6M17 5v6" stroke="#1c1c1c" stroke-width="1"/><path d="M4 8h10" stroke="#1c1c1c" stroke-width="1.200"/><path d="M2 8 5.400 5.800v4.400zM16 8 12.600 5.800v4.400z" fill="#1c1c1c"/></svg><span class="t" style="left:62.4px;top:929.80px;font-size:12.8px;color:#1c1c1c;letter-spacing:0.24px;-webkit-text-stroke:0.3px #1c1c1c;">Afstand meten</span><svg class="i" style="left:29.5px;top:962.0px" width="16" height="18" viewBox="0 0 16 18" ><rect x=".8" y=".8" width="14.400" height="16.400" rx="1.500" fill="none" stroke="#1c1c1c" stroke-width="1.400"/><path d="M4.500 5 11 12" stroke="#1c1c1c" stroke-width="1.400"/><path d="M3.400 3.800 7 4.800 4.400 7.400zM12.200 13.400 8.600 12.400 11.200 9.800z" fill="#1c1c1c"/><path d="M1 4.500h3.500V1" stroke="#999" stroke-width=".6" fill="none"/></svg><span class="t" style="left:62.4px;top:965.80px;font-size:12.8px;color:#1c1c1c;letter-spacing:0.12px;-webkit-text-stroke:0.3px #1c1c1c;">Meet gebied</span><div id="tabrow"></div><div id="tabgrey"></div><div id="tab1"></div><div id="tab2"></div><span class="t" style="left:7.2px;top:145.75px;font-size:15.3px;color:#2a2a2a;letter-spacing:0.06px;">SmartPanel</span><span class="t" style="left:106.4px;top:145.75px;font-size:15.3px;color:#1b6ec2;letter-spacing:-0.12px;-webkit-text-stroke:0.25px #1b6ec2;">Symbolen</span><span class="t" style="left:202.0px;top:145.75px;font-size:15.3px;color:#1b6ec2;letter-spacing:-0.65px;-webkit-text-stroke:0.25px #1b6ec2;">Gegevens</span><span class="t" style="left:294.0px;top:142.20px;font-size:21px;color:#9a9a9a;font-weight:bold;letter-spacing:-0.82px;-webkit-text-stroke:0.7px #9a9a9a;">X</span><span class="t" style="left:326.7px;top:147.90px;font-size:13px;color:#444;letter-spacing:-0.79px;">&gt;</span><span class="t" style="left:365.7px;top:145.75px;font-size:15.3px;color:#6a6a6a;letter-spacing:-0.57px;">Pagina</span><span class="t" style="left:411.0px;top:145.75px;font-size:15.3px;color:#222;letter-spacing:-0.28px;">...</span><svg class="i" style="left:432.7px;top:146.5px" width="17" height="17" viewBox="0 0 17 17" ><circle cx="8.5" cy="8.5" r="7.500" fill="none" stroke="#666" stroke-width="1.200"/><path d="M8.500 4.500v8M4.500 8.500h8" stroke="#666" stroke-width="1.300"/></svg><div id="banner"></div><svg class="i" style="left:328.4px;top:188.1px" width="13" height="13" viewBox="0 0 13 13" ><circle cx="6.500" cy="6.500" r="6.500" fill="#9a6a1c"/><path d="M5 5.600h2.400v4h1v1.200H4.800V9.600h1V6.800H5z" fill="#fdf5dc"/><circle cx="6.400" cy="3.400" r="1.100" fill="#fdf5dc"/></svg><span class="t" style="left:342.5px;top:187.60px;font-size:15.6px;color:#9d6c1d;font-weight:bold;letter-spacing:-0.53px;-webkit-text-stroke:0.3px #9d6c1d;">U bent niet ingelogd.</span><span class="t" style="left:491.7px;top:187.60px;font-size:15.6px;color:#a47a32;letter-spacing:0.1px;">Om te voorkomen dat u uw werk kwijtraakt, dient u</span><span class="t" style="left:850.0px;top:187.60px;font-size:15.6px;color:#1b6ec2;font-weight:bold;letter-spacing:-0.57px;-webkit-text-stroke:0.3px #1b6ec2;">een account aan te maken</span><span class="t" style="left:1036.0px;top:187.60px;font-size:15.6px;color:#a47a32;letter-spacing:0.04px;">zodat uw werk permanent wordt opgeslagen.</span>
</div></body></html>
